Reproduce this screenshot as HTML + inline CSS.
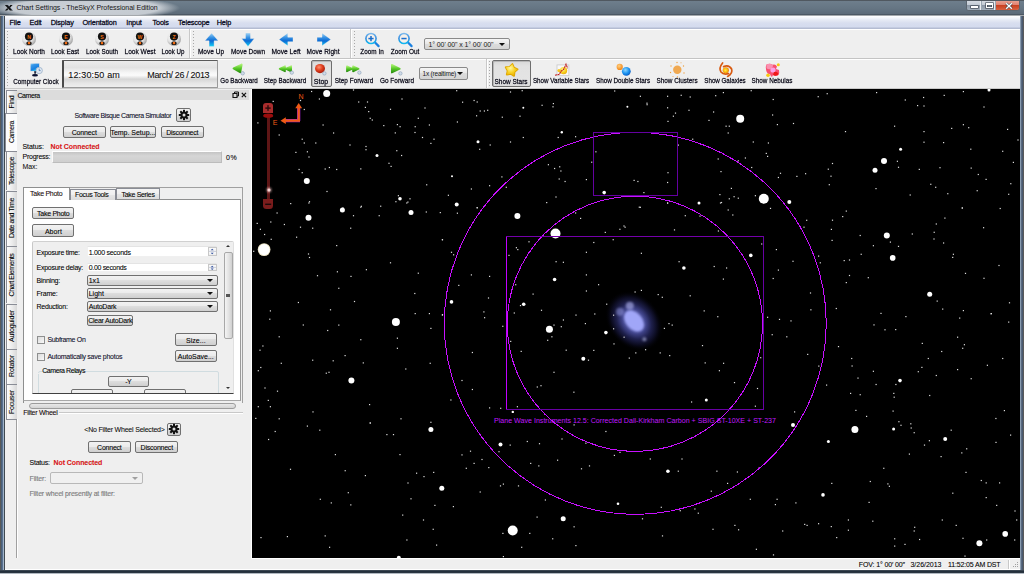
<!DOCTYPE html>
<html><head><meta charset="utf-8">
<style>
*{margin:0;padding:0;box-sizing:border-box}
html,body{width:1024px;height:574px;overflow:hidden}
body{position:relative;background:#5f6f7d;font-family:"Liberation Sans",sans-serif;color:#000}
.a{position:absolute}
.t{position:absolute;font-size:7px;letter-spacing:-0.3px;white-space:nowrap;line-height:8px;color:#000;-webkit-text-stroke:0.3px rgba(0,0,30,.75)}
#title{left:0;top:0;width:1024px;height:16px;background:linear-gradient(180deg,#505860 0,#505860 1px,#6e7e8c 1px,#667684 8px,#5c6a78 14px,#4c5864 14px,#4c5864 15px,#a4a8ac 15px)}
#title:after{content:"";position:absolute;left:0;top:1px;width:230px;height:14px;background:radial-gradient(ellipse 95px 12px at 85px 7px,rgba(205,210,216,.97) 0,rgba(205,210,216,.92) 78%,rgba(205,210,216,0) 100%)}
#frameL{left:0;top:16px;width:5px;height:554px;background:linear-gradient(90deg,#5a5a5a 0,#5a5a5a 1px,#4a6078 1px,#4a6078 2px,#5a7090 2px,#5a7090 3px,#a0b4c8 3px,#a0b4c8 4px,#404850 4px)}
#frameR{left:1020px;top:16px;width:4px;height:554px;background:linear-gradient(90deg,#8a9cb0 0,#8a9cb0 1px,#5a6a80 1px,#5a6a80 2px,#4a5a70 2px,#4a5a70 3px,#5a5a5a 3px)}
#frameB{left:0;top:570px;width:1024px;height:4px;background:linear-gradient(180deg,#3a4550 0,#3a4550 1px,#23303c 1px,#23303c 2px,#2a3540 2px,#2a3540 3px,#b0b8c0 3px)}
#menu{left:5px;top:16px;width:1015px;height:13px;background:linear-gradient(180deg,#ffffff 0,#f4f6fb 2px,#e6eaf4 4px,#d8deef 7px,#d4dbee 11px,#b4bcd2 12px,#b4bcd2 13px)}
#menu span{position:absolute;top:3px;font-size:7.5px;letter-spacing:-0.2px;color:#10104a}
#tb1{left:5px;top:29px;width:1015px;height:30px;background:#efefef;border-top:1px solid #fff;border-bottom:1px solid #c4c4c4}
#tb2{left:5px;top:59px;width:1015px;height:30px;background:#efefef;border-top:1px solid #fff;border-bottom:1px solid #c9c9c9}
#dock{left:5px;top:89px;width:247px;height:481px;background:#efefef;border-bottom:1px solid #fff}
#sky{left:252px;top:89px;width:768px;height:469px;background:#000}
#status{left:252px;top:558px;width:768px;height:12px;background:#efefef;border-top:1px solid #fff;border-bottom:1px solid #fff}
.m{font-size:7.3px;letter-spacing:-0.15px;color:#000}
.grip{position:absolute;width:1px;background:repeating-linear-gradient(180deg,#a8a8a8 0,#a8a8a8 1px,transparent 1px,transparent 3px)}
.combo{position:absolute;border:1px solid #8a8a8a;border-radius:2px;background:linear-gradient(180deg,#f6f6f6 0,#e8e8e8 45%,#dcdcdc 50%,#d4d4d4 100%)}
.combo span{position:absolute;top:2px;font-size:6.5px;letter-spacing:-0.2px;line-height:7px;white-space:nowrap;color:#202020}
.combo i{position:absolute;right:4px;top:4px;width:0;height:0;border-left:3px solid transparent;border-right:3px solid transparent;border-top:3px solid #111}
.press{position:absolute;border:1px solid #6e6e6e;border-radius:2px;background:linear-gradient(180deg,#d8d8d8 0,#e2e2e2 20%,#e4e4e4 80%,#dadada 100%);box-shadow:inset 1px 1px 0 #b8b8b8}
#timebox{border:1px solid #9a9a9a;border-left:2px solid #4a4a4a;border-top:1px solid #5a5a5a;border-radius:1px;background:linear-gradient(180deg,#ececec 0,#e2e2e2 25%,#f6f6f6 45%,#fbfbfb 55%,#d6d6d6 70%,#e6e6e6 85%,#eeeeee 100%)}
.d{position:absolute;white-space:nowrap;line-height:8px;font-size:7px;color:#000;-webkit-text-stroke:0.15px rgba(0,0,0,.5)}
.btn{position:absolute;border:1px solid #707070;border-radius:2px;background:linear-gradient(180deg,#f2f2f2 0,#ebebeb 45%,#dddddd 50%,#cfcfcf 100%)}
.cmb{position:absolute;border:1px solid #707070;border-radius:2px;background:linear-gradient(180deg,#f2f2f2 0,#ebebeb 45%,#dddddd 50%,#cfcfcf 100%)}
.cmb i{position:absolute;right:4px;top:3.3px;width:0;height:0;border-left:3px solid transparent;border-right:3px solid transparent;border-top:3px solid #111}
.cmb.dis{border-color:#b8b8b8;background:#f0f0f0}
.cmb.dis i{border-top-color:#a0a0a0}
.fld{position:absolute;background:#fff;border:1px solid #f0f0f0;border-top-color:#e4e4e4}
.spin{position:absolute;border:1px solid #c8c8c8;background:linear-gradient(180deg,#fafafa,#eeeeee 48%,#d0d4e0 50%,#fafafa 52%,#eeeeee)}
.chk{position:absolute;border:1px solid #8e8f8f;background:linear-gradient(135deg,#dcdcdc,#f8f8f8)}
.vtab{position:absolute;border:1px solid #898c95;border-right:none;border-bottom:none;background:linear-gradient(90deg,#fbfbfb 0,#ececec 50%,#d8d8d8 100%)}
.vtab.sel{background:#fcfcfc}
.htab{position:absolute;border:1px solid #898c95;border-bottom:none;background:linear-gradient(180deg,#f4f4f4 0,#efefef 45%,#e4e4e4 55%,#dcdcdc 100%)}
</style></head><body>
<div id="title" class="a"></div>
<svg class="a" style="left:4.2px;top:3.6px" width="9.5" height="7.5" viewBox="0 0 11 10" preserveAspectRatio="none"><path d="M1 1.2 L4.2 1.2 L10 8.8 L6.8 8.8 Z" fill="#111"/><path d="M10 1.2 L7.4 1.2 L5.2 4.2 L6.4 5.8 Z M1 8.8 L3.6 8.8 L5 6.9 L3.8 5.3 Z" fill="#111"/><path d="M4.2 1.2 L10 8.8" stroke="#3a4a70" stroke-width=".5"/></svg>
<div class="a" style="left:16.4px;top:4px;font-size:7px;letter-spacing:-0.03px;line-height:8px;white-space:nowrap;color:#151515">Chart Settings - TheSkyX Professional Edition</div>
<div class="a" style="left:966px;top:1px;width:54px;height:10px;border:1px solid #5c6670;border-top:none;border-radius:0 0 3px 3px;overflow:hidden;background:#9aa6b2">
 <div class="a" style="left:0;top:0;width:14px;height:9px;background:linear-gradient(180deg,#d4dae2 0,#c2cad4 45%,#8c98a6 50%,#a4b0bc 100%);border-right:1px solid #e8ecf0"></div>
 <div class="a" style="left:15px;top:0;width:13px;height:9px;background:linear-gradient(180deg,#d4dae2 0,#c2cad4 45%,#8c98a6 50%,#a4b0bc 100%);border-right:1px solid #e8ecf0"></div>
 <div class="a" style="left:29px;top:0;width:24px;height:9px;background:linear-gradient(180deg,#e8a090 0,#e08070 45%,#c84020 50%,#d86040 100%)"></div>
 <div class="a" style="left:4px;top:5px;width:6.5px;height:2px;background:#fff;box-shadow:0 0 0 .6px #39424c"></div>
 <div class="a" style="left:18.5px;top:1.6px;width:7px;height:5.8px;border:1.3px solid #fff;border-top-width:2px;box-shadow:0 0 0 .6px #39424c, inset 0 0 0 .6px #39424c"></div>
 <svg class="a" style="left:36.5px;top:1.2px" width="10" height="8" viewBox="0 0 10 8"><path d="M2.2 1.3 L7.8 6.7 M7.8 1.3 L2.2 6.7" stroke="#39424c" stroke-width="2.5"/><path d="M2.2 1.3 L7.8 6.7 M7.8 1.3 L2.2 6.7" stroke="#fff" stroke-width="1.4"/></svg>
</div>
<div id="frameL" class="a"></div>
<div id="frameR" class="a"></div>
<div id="menu" class="a"></div>
<div id="tb1" class="a"></div>
<div id="tb2" class="a"></div>
<svg width="0" height="0" style="position:absolute"><defs>
<radialGradient id="sph" cx=".4" cy=".35" r=".7"><stop offset="0" stop-color="#ffffff"/><stop offset=".55" stop-color="#e4e4e4"/><stop offset="1" stop-color="#9a9a9a"/></radialGradient>
<linearGradient id="blu" gradientUnits="userSpaceOnUse" x1="0" y1="32.5" x2="0" y2="46.5"><stop offset="0" stop-color="#b0dcf8"/><stop offset=".35" stop-color="#3a94e4"/><stop offset=".6" stop-color="#0c6ad4"/><stop offset="1" stop-color="#10d0f8"/></linearGradient>
<linearGradient id="grn" x1="0" y1="0" x2="0" y2="1"><stop offset="0" stop-color="#a8f070"/><stop offset=".5" stop-color="#58c828"/><stop offset="1" stop-color="#2a9010"/></linearGradient>
<radialGradient id="red" cx=".4" cy=".35" r=".7"><stop offset="0" stop-color="#ff9070"/><stop offset=".5" stop-color="#e04020"/><stop offset="1" stop-color="#a01808"/></radialGradient>
<radialGradient id="yel" cx=".4" cy=".35" r=".8"><stop offset="0" stop-color="#fff8a0"/><stop offset=".5" stop-color="#f8d020"/><stop offset="1" stop-color="#e0a000"/></radialGradient>
<radialGradient id="org" cx=".4" cy=".35" r=".7"><stop offset="0" stop-color="#ffd080"/><stop offset="1" stop-color="#f08010"/></radialGradient>
<radialGradient id="bluc" cx=".4" cy=".35" r=".7"><stop offset="0" stop-color="#90d8ff"/><stop offset=".6" stop-color="#1890f0"/><stop offset="1" stop-color="#0858c0"/></radialGradient>
<radialGradient id="org2" cx=".45" cy=".5" r=".6"><stop offset="0" stop-color="#fff040"/><stop offset=".6" stop-color="#f8b010"/><stop offset="1" stop-color="#e06a10"/></radialGradient>
<linearGradient id="lens" x1="0" y1="0" x2="0" y2="1"><stop offset="0" stop-color="#7ab8ec"/><stop offset=".5" stop-color="#2a88e0"/><stop offset="1" stop-color="#10b8f0"/></linearGradient>
<linearGradient id="mon" x1="0" y1="0" x2=".6" y2="1"><stop offset="0" stop-color="#a0d8fa"/><stop offset=".3" stop-color="#3898e8"/><stop offset=".7" stop-color="#1a80e0"/><stop offset="1" stop-color="#20d0f8"/></linearGradient>
</defs></svg>
<div class="t m" style="left:9.5px;top:18.6px">File</div>
<div class="t m" style="left:29.5px;top:18.6px">Edit</div>
<div class="t m" style="left:50.75px;top:18.6px">Display</div>
<div class="t m" style="left:82.5px;top:18.6px">Orientation</div>
<div class="t m" style="left:126.25px;top:18.6px">Input</div>
<div class="t m" style="left:152.5px;top:18.6px">Tools</div>
<div class="t m" style="left:178px;top:18.6px">Telescope</div>
<div class="t m" style="left:216.75px;top:18.6px">Help</div>
<div class="grip" style="left:7px;top:31px;height:25px"></div>
<div class="a" style="left:189px;top:29px;width:1px;height:29px;background:#c8c8c8;box-shadow:1px 0 0 #fff"></div>
<div class="grip" style="left:193px;top:31px;height:25px"></div>
<div class="a" style="left:350px;top:29px;width:1px;height:29px;background:#c8c8c8;box-shadow:1px 0 0 #fff"></div>
<div class="grip" style="left:354px;top:31px;height:25px"></div>
<div class="grip" style="left:7px;top:61px;height:26px"></div>
<div class="a" style="left:485.5px;top:59px;width:1px;height:29px;background:#c8c8c8;box-shadow:1px 0 0 #fff"></div>
<div class="grip" style="left:488.5px;top:61px;height:26px"></div>
<svg class="a" style="left:21.2px;top:31.3px" width="16" height="16" viewBox="-8 -8 16 16">
<circle r="7" fill="url(#sph)"/>
<circle cy="-2.4" r="4.1" fill="#111"/>
<text y="-0.3" text-anchor="middle" font-family="Liberation Sans" font-weight="bold" font-size="5.2" fill="#f07010">N</text>
<rect x="-2.6" y="2.4" width="5.2" height="3.6" rx="1.6" fill="#151515"/>
<circle cy="4.1" r="1.3" fill="#f06a10"/>
</svg>
<div class="t" style="left:-21.00px;top:47.64px;width:100px;text-align:center;font-size:8.0px;letter-spacing:0;transform:scaleX(0.815);">Look North</div>
<svg class="a" style="left:57.6px;top:31.3px" width="16" height="16" viewBox="-8 -8 16 16">
<circle r="7" fill="url(#sph)"/>
<circle cy="-2.4" r="4.1" fill="#111"/>
<text y="-0.3" text-anchor="middle" font-family="Liberation Sans" font-weight="bold" font-size="5.2" fill="#f07010">E</text>
<rect x="-2.6" y="2.4" width="5.2" height="3.6" rx="1.6" fill="#151515"/>
<circle cy="4.1" r="1.3" fill="#f06a10"/>
</svg>
<div class="t" style="left:15.20px;top:47.64px;width:100px;text-align:center;font-size:8.0px;letter-spacing:0;transform:scaleX(0.793);">Look East</div>
<svg class="a" style="left:94.0px;top:31.3px" width="16" height="16" viewBox="-8 -8 16 16">
<circle r="7" fill="url(#sph)"/>
<circle cy="-2.4" r="4.1" fill="#111"/>
<text y="-0.3" text-anchor="middle" font-family="Liberation Sans" font-weight="bold" font-size="5.2" fill="#f07010">S</text>
<rect x="-2.6" y="2.4" width="5.2" height="3.6" rx="1.6" fill="#151515"/>
<circle cy="4.1" r="1.3" fill="#f06a10"/>
</svg>
<div class="t" style="left:51.50px;top:47.64px;width:100px;text-align:center;font-size:8.0px;letter-spacing:0;transform:scaleX(0.790);">Look South</div>
<svg class="a" style="left:132.0px;top:31.3px" width="16" height="16" viewBox="-8 -8 16 16">
<circle r="7" fill="url(#sph)"/>
<circle cy="-2.4" r="4.1" fill="#111"/>
<text y="-0.3" text-anchor="middle" font-family="Liberation Sans" font-weight="bold" font-size="5.2" fill="#f07010">W</text>
<rect x="-2.6" y="2.4" width="5.2" height="3.6" rx="1.6" fill="#151515"/>
<circle cy="4.1" r="1.3" fill="#f06a10"/>
</svg>
<div class="t" style="left:90.00px;top:47.64px;width:100px;text-align:center;font-size:8.0px;letter-spacing:0;transform:scaleX(0.823);">Look West</div>
<svg class="a" style="left:165.5px;top:31.3px" width="16" height="16" viewBox="-8 -8 16 16">
<circle r="7" fill="url(#sph)"/>
<circle cy="-2.4" r="4.1" fill="#111"/>
<text y="-0.3" text-anchor="middle" font-family="Liberation Sans" font-weight="bold" font-size="5.2" fill="#f07010">Z</text>
<rect x="-2.6" y="2.4" width="5.2" height="3.6" rx="1.6" fill="#151515"/>
<circle cy="4.1" r="1.3" fill="#f06a10"/>
</svg>
<div class="t" style="left:123.00px;top:47.64px;width:100px;text-align:center;font-size:8.0px;letter-spacing:0;transform:scaleX(0.772);">Look Up</div>
<svg class="a" style="left:195px;top:30px" width="145" height="18" viewBox="195 30 145 18"><path d="M211.6 32.9 L218.2 40.8 L214.1 40.8 L214.1 46.4 L209.1 46.4 L209.1 40.8 L205 40.8 Z M248 46.4 L254.4 38.5 L250.5 38.5 L250.5 32.9 L245.5 32.9 L245.5 38.5 L241.6 38.5 Z M279 39.4 L287.8 32.9 L287.8 37.2 L293 37.2 L293 41.7 L287.8 41.7 L287.8 45.8 Z M330.8 39.4 L322 32.9 L322 37.2 L317 37.2 L317 41.7 L322 41.7 L322 45.8 Z" fill="url(#blu)" stroke="#fff4e8" stroke-width=".5" stroke-opacity=".7"/></svg>
<div class="t" style="left:161.20px;top:47.54px;width:100px;text-align:center;font-size:8.0px;letter-spacing:0;transform:scaleX(0.818);">Move Up</div>
<div class="t" style="left:197.50px;top:47.54px;width:100px;text-align:center;font-size:8.0px;letter-spacing:0;transform:scaleX(0.807);">Move Down</div>
<div class="t" style="left:236.00px;top:47.54px;width:100px;text-align:center;font-size:8.0px;letter-spacing:0;transform:scaleX(0.831);">Move Left</div>
<div class="t" style="left:273.40px;top:47.54px;width:100px;text-align:center;font-size:8.0px;letter-spacing:0;transform:scaleX(0.813);">Move Right</div>
<svg class="a" style="left:363.5px;top:30.5px" width="18" height="18" viewBox="-7 -7.5 18 18">
<path d="M3.8 3.8 L7.6 7.6" stroke="#1a80e0" stroke-width="2.2" stroke-linecap="round"/>
<circle r="5.1" fill="#f6f0ea" stroke="url(#lens)" stroke-width="1.5"/><rect x="-2.6" y="-0.7" width="5.2" height="1.5" fill="#1a70d0"/><rect x="-0.75" y="-2.5" width="1.5" height="5.2" fill="#1a6cc8"/>
</svg>
<div class="t" style="left:322.20px;top:47.54px;width:100px;text-align:center;font-size:8.0px;letter-spacing:0;transform:scaleX(0.797);">Zoom In</div>
<svg class="a" style="left:397.0px;top:30.5px" width="18" height="18" viewBox="-7 -7.5 18 18">
<path d="M3.8 3.8 L7.6 7.6" stroke="#1a80e0" stroke-width="2.2" stroke-linecap="round"/>
<circle r="5.1" fill="#f6f0ea" stroke="url(#lens)" stroke-width="1.5"/><rect x="-2.6" y="-0.7" width="5.2" height="1.5" fill="#1a70d0"/>
</svg>
<div class="t" style="left:354.80px;top:47.54px;width:100px;text-align:center;font-size:8.0px;letter-spacing:0;transform:scaleX(0.801);">Zoom Out</div>
<div class="combo" style="left:424px;top:37.5px;width:86px;height:12px"><span style="left:0;width:72px;text-align:center;font-size:7px;letter-spacing:-0.1px">1° 00' 00" x 1° 00' 00"</span><i></i></div>
<svg class="a" style="left:28px;top:62px" width="18" height="16" viewBox="0 0 18 16">
<rect x="2.3" y="1.3" width="9" height="7.8" fill="url(#mon)" stroke="#f4e8e0" stroke-width=".4"/><rect x="6.3" y="9.1" width="1.6" height="2.6" fill="#101830"/><ellipse cx="7" cy="13.3" rx="3" ry="1.3" fill="#0a1030"/>
<circle cx="11.2" cy="8.5" r="3.2" fill="#dfe8f2" stroke="#9ab0c8" stroke-width=".8"/><path d="M11.2 6.6 v2 h1.4" stroke="#3a6aa0" stroke-width=".7" fill="none"/>
</svg>
<div class="t" style="left:-14.20px;top:77.84px;width:100px;text-align:center;font-size:8.0px;letter-spacing:0;transform:scaleX(0.793);">Computer Clock</div>
<div class="a" id="timebox" style="left:62px;top:60px;width:156px;height:28px"></div>
<div class="a" style="left:68.3px;top:69.5px;font-size:9px;letter-spacing:0.15px;line-height:10px;color:#111;-webkit-text-stroke:.1px #111;white-space:nowrap">12:30:50 am</div>
<div class="a" style="left:147.3px;top:69.5px;font-size:9px;letter-spacing:-0.35px;line-height:10px;color:#111;-webkit-text-stroke:.1px #111;white-space:nowrap">March/ 26 / 2013</div>
<div class="press" style="left:311px;top:60px;width:21px;height:27px"></div>
<div class="press" style="left:491.5px;top:60.3px;width:39.5px;height:26.6px"></div>
<svg class="a" style="left:220px;top:58px" width="200" height="20" viewBox="220 58 200 20"><path d="M233.6 68.4 L241.6 64.6 L240.2 72.2 Z" fill="url(#grn)" stroke="url(#grn)" stroke-width="2" stroke-linejoin="round"/><circle cx="242.7" cy="73.3" r="1.7" fill="#d0dce8" stroke="#8aa0b8" stroke-width=".6"/><path d="M279.6 68.8 L285 66.2 L285 71.4 Z M285.6 68.8 L291.2 66.2 L291.2 71.4 Z" fill="url(#grn)" stroke="url(#grn)" stroke-width="1.6" stroke-linejoin="round"/><circle cx="291.8" cy="72.6" r="1.7" fill="#d0dce8" stroke="#8aa0b8" stroke-width=".6"/><ellipse cx="320" cy="68.6" rx="5" ry="4.6" fill="url(#red)"/><circle cx="324.4" cy="73.4" r="1.7" fill="#d0dce8" stroke="#8aa0b8" stroke-width=".6"/><path d="M346.9 66.2 L352.3 68.8 L346.9 71.4 Z M353 66.2 L358.6 68.8 L353 71.4 Z" fill="url(#grn)" stroke="url(#grn)" stroke-width="1.6" stroke-linejoin="round"/><circle cx="359.4" cy="72.6" r="1.7" fill="#d0dce8" stroke="#8aa0b8" stroke-width=".6"/><path d="M391.8 64.8 L399.8 68.8 L391.8 72.6 Z" fill="url(#grn)" stroke="url(#grn)" stroke-width="1.6" stroke-linejoin="round"/><circle cx="400.4" cy="73.4" r="1.7" fill="#d0dce8" stroke="#8aa0b8" stroke-width=".6"/></svg>
<div class="t" style="left:188.80px;top:77.24px;width:100px;text-align:center;font-size:8.0px;letter-spacing:0;transform:scaleX(0.779);">Go Backward</div>
<div class="t" style="left:235.30px;top:77.24px;width:100px;text-align:center;font-size:8.0px;letter-spacing:0;transform:scaleX(0.788);">Step Backward</div>
<div class="t" style="left:270.80px;top:78.04px;width:100px;text-align:center;font-size:8.0px;letter-spacing:0;transform:scaleX(0.880);">Stop</div>
<div class="t" style="left:303.70px;top:77.24px;width:100px;text-align:center;font-size:8.0px;letter-spacing:0;transform:scaleX(0.802);">Step Forward</div>
<div class="t" style="left:346.50px;top:77.24px;width:100px;text-align:center;font-size:8.0px;letter-spacing:0;transform:scaleX(0.805);">Go Forward</div>
<div class="combo" style="left:418.5px;top:67.4px;width:49.5px;height:12.2px"><span style="left:3px;width:36px">1x (realtime)</span><i></i></div>
<svg class="a" style="left:500px;top:60px" width="300" height="20" viewBox="500 60 300 20">
<polygon points="512.39,64.00 513.96,67.63 517.54,69.32 514.57,71.94 514.06,75.86 510.66,73.84 506.77,74.58 507.64,70.71 505.74,67.24 509.68,66.87" fill="url(#yel)" stroke="#e0a800" stroke-width="1.8" stroke-linejoin="round"/><polygon points="512.39,64.00 513.96,67.63 517.54,69.32 514.57,71.94 514.06,75.86 510.66,73.84 506.77,74.58 507.64,70.71 505.74,67.24 509.68,66.87" fill="url(#yel)"/>
<rect x="557" y="64.9" width="11.9" height="10.8" fill="#f8f8f8" stroke="#c8c8c8" stroke-width=".8"/>
<circle cx="563.6" cy="70.6" r="3.6" fill="url(#yel)"/><circle cx="559" cy="70.6" r="1.6" fill="#f8c820"/>
<path d="M555 75.3 L559.5 74.2 L560.6 71.6 L563.8 69.2 L564.6 67.4 L566 64.2 L567.6 68.3" stroke="#c01818" stroke-width="1.1" fill="none" stroke-dasharray="2 .6"/>
<circle cx="619.7" cy="66.9" r="3.1" fill="url(#org)"/>
<circle cx="626.3" cy="71.3" r="4.4" fill="url(#bluc)"/>
<g fill="#f0a040"><circle cx="677.3" cy="69.7" r="4.2" fill="#f0a850"/>
<circle cx="671" cy="66" r=".7"/><circle cx="683.5" cy="66" r=".7"/><circle cx="670.5" cy="72.5" r=".7"/><circle cx="684" cy="73" r=".7"/><circle cx="677" cy="62.5" r=".7"/><circle cx="677.5" cy="77" r=".7"/><circle cx="681" cy="62.8" r=".5"/><circle cx="673" cy="76.5" r=".5"/></g>
<path d="M722.6 63 Q718.5 68 721 72 Q723.5 75 728.5 73.6" stroke="#d85a10" stroke-width="1.7" fill="none" stroke-linecap="round"/>
<path d="M723.6 66.6 Q729 64.5 731.6 69 Q733 73.5 727.6 76.4" stroke="#d85a10" stroke-width="1.7" fill="none" stroke-linecap="round"/>
<circle cx="725.8" cy="70.3" r="3.1" fill="url(#org2)"/>
<path d="M766.5 64.5 Q770 62.8 772.5 64.8 Q775.5 63.5 777 66.5 L776 69 L779 70 Q780 73 778 75.5 Q775 76.5 773 75 L772 77 Q770.5 76.2 770 74.2 Q767 74 766.2 70.5 Q765 67 766.5 64.5Z" fill="#f85070"/>
<path d="M766.5 64.5 Q770 62.8 772.5 64.8 Q774 66 771 69 Q768 70 766.5 68Z" fill="#fa90b0"/>
<circle cx="773" cy="70" r="2.6" fill="#f8a0e8"/>
<path d="M774 72 Q778 71 778.5 74.5 Q776 76.5 773 75Z" fill="#f01818"/>
<circle cx="778.3" cy="64.8" r="1.5" fill="#f8c810"/><circle cx="768" cy="75.3" r="1.8" fill="#f8c810"/>
</svg>
<div class="t" style="left:461.00px;top:77.74px;width:100px;text-align:center;font-size:8.0px;letter-spacing:0;transform:scaleX(0.807);">Show Stars</div>
<div class="t" style="left:511.40px;top:77.24px;width:100px;text-align:center;font-size:8.0px;letter-spacing:0;transform:scaleX(0.782);">Show Variable Stars</div>
<div class="t" style="left:573.00px;top:77.24px;width:100px;text-align:center;font-size:8.0px;letter-spacing:0;transform:scaleX(0.790);">Show Double Stars</div>
<div class="t" style="left:626.90px;top:77.24px;width:100px;text-align:center;font-size:8.0px;letter-spacing:0;transform:scaleX(0.799);">Show Clusters</div>
<div class="t" style="left:674.80px;top:77.24px;width:100px;text-align:center;font-size:8.0px;letter-spacing:0;transform:scaleX(0.776);">Show Galaxies</div>
<div class="t" style="left:722.30px;top:77.24px;width:100px;text-align:center;font-size:8.0px;letter-spacing:0;transform:scaleX(0.793);">Show Nebulas</div>
<div id="dock" class="a"></div>
<div class="a" style="left:251px;top:89px;width:1px;height:470px;background:#fff"></div>
<div class="a" style="left:16px;top:419px;width:1px;height:139px;background:#a0a0a0;box-shadow:1px 0 0 #fff"></div>
<div class="a" style="left:6px;top:419.3px;width:11px;height:1px;background:#898c95"></div>
<div class="vtab" style="left:6px;top:90.0px;width:11px;height:23.0px"></div>
<div class="d" style="left:-38.5px;top:97.5px;width:100px;height:8px;text-align:center;font-size:7px;line-height:8px;letter-spacing:-0.156px;transform:rotate(-90deg)">Find</div>
<div class="vtab sel" style="left:5px;top:113.0px;width:12px;height:39.2px;border-bottom:1px solid #898c95"></div>
<div class="d" style="left:-38.5px;top:128.1px;width:100px;height:8px;text-align:center;font-size:7px;line-height:8px;letter-spacing:-0.518px;transform:rotate(-90deg)">Camera</div>
<div class="vtab" style="left:6px;top:151.2px;width:11px;height:39.3px"></div>
<div class="d" style="left:-38.5px;top:166.8px;width:100px;height:8px;text-align:center;font-size:7px;line-height:8px;letter-spacing:-0.392px;transform:rotate(-90deg)">Telescope</div>
<div class="vtab" style="left:6px;top:190.5px;width:11px;height:55.8px"></div>
<div class="d" style="left:-38.5px;top:214.4px;width:100px;height:8px;text-align:center;font-size:7px;line-height:8px;letter-spacing:-0.425px;transform:rotate(-90deg)">Date and Time</div>
<div class="vtab" style="left:6px;top:246.3px;width:11px;height:57.2px"></div>
<div class="d" style="left:-38.5px;top:270.9px;width:100px;height:8px;text-align:center;font-size:7px;line-height:8px;letter-spacing:-0.375px;transform:rotate(-90deg)">Chart Elements</div>
<div class="vtab" style="left:6px;top:303.5px;width:11px;height:45.3px"></div>
<div class="d" style="left:-38.5px;top:322.1px;width:100px;height:8px;text-align:center;font-size:7px;line-height:8px;letter-spacing:-0.186px;transform:rotate(-90deg)">Autoguider</div>
<div class="vtab" style="left:6px;top:348.8px;width:11px;height:35.2px"></div>
<div class="d" style="left:-38.5px;top:362.4px;width:100px;height:8px;text-align:center;font-size:7px;line-height:8px;letter-spacing:-0.138px;transform:rotate(-90deg)">Rotator</div>
<div class="vtab" style="left:6px;top:384.0px;width:11px;height:35.3px"></div>
<div class="d" style="left:-38.5px;top:397.6px;width:100px;height:8px;text-align:center;font-size:7px;line-height:8px;letter-spacing:-0.185px;transform:rotate(-90deg)">Focuser</div>
<div class="a" style="left:17px;top:90px;width:232px;height:10px;background:#dcdcdc"></div>
<div class="d" style="left:17.50px;top:91.66px;font-size:7px;letter-spacing:-0.443px;color:#000;">Camera</div>
<svg class="a" style="left:230px;top:91px" width="18" height="8" viewBox="0 0 18 8"><path d="M3 2.5 h4 v4 h-4z" fill="none" stroke="#111" stroke-width="1.1"/><path d="M4.5 2.5 v-1.5 h4 v4 h-1.5" fill="none" stroke="#111" stroke-width="1"/><path d="M11.8 1.8 L16 6.2 M16 1.8 L11.8 6.2" stroke="#111" stroke-width="1.2"/></svg>
<div class="d" style="left:74.50px;top:111.66px;font-size:7px;letter-spacing:-0.395px;color:#101030;">Software Bisque Camera Simulator</div>
<div class="btn" style="left:176.0px;top:108.0px;width:15.0px;height:13.6px"></div>
<svg class="a" style="left:177.5px;top:108.8px" width="12" height="12" viewBox="-6 -6 12 12"><g fill="#111"><rect x="-1" y="-5.2" width="2" height="10.4" transform="rotate(0)"/><rect x="-1" y="-5.2" width="2" height="10.4" transform="rotate(45)"/><rect x="-1" y="-5.2" width="2" height="10.4" transform="rotate(90)"/><rect x="-1" y="-5.2" width="2" height="10.4" transform="rotate(135)"/><circle r="3.6"/></g><circle r="1.5" fill="#ddd"/></svg>
<div class="btn" style="left:63.0px;top:126.3px;width:42.6px;height:12.2px"></div>
<div class="d" style="left:24.22px;top:129.46px;width:120px;text-align:center;font-size:7px;letter-spacing:-0.154px;color:#000;">Connect</div>
<div class="btn" style="left:110.0px;top:126.3px;width:45.8px;height:12.2px"></div>
<div class="d" style="left:72.89px;top:129.46px;width:120px;text-align:center;font-size:7px;letter-spacing:-0.024px;color:#000;">Temp. Setup...</div>
<div class="btn" style="left:160.8px;top:126.3px;width:43.0px;height:12.2px"></div>
<div class="d" style="left:122.16px;top:129.46px;width:120px;text-align:center;font-size:7px;letter-spacing:-0.284px;color:#000;">Disconnect</div>
<div class="d" style="left:22.50px;top:142.66px;font-size:7px;letter-spacing:-0.057px;color:#000;">Status:</div>
<div class="d" style="left:50.50px;top:142.66px;font-size:7px;letter-spacing:-0.060px;color:#f01818;font-weight:bold;">Not Connected</div>
<div class="d" style="left:22.50px;top:153.36px;font-size:7px;letter-spacing:-0.241px;color:#000;">Progress:</div>
<div class="a" style="left:52px;top:151.3px;width:170px;height:11.3px;background:linear-gradient(180deg,#c4c4c4,#d6d6d6 40%,#cfcfcf);border:1px solid #bcbcbc;border-top-color:#fff;border-left-color:#fafafa"></div>
<div class="d" style="left:226.00px;top:154.36px;font-size:7px;letter-spacing:0.688px;color:#000;">0%</div>
<div class="d" style="left:22.50px;top:163.36px;font-size:7px;letter-spacing:-0.068px;color:#202020;">Max:</div>
<div class="a" style="left:23px;top:186.5px;width:220px;height:216px;border:1px solid #a0a0a0;border-left-color:#8e8f8f;border-bottom:none"></div>
<div class="a" style="left:23.4px;top:199.3px;width:217.6px;height:201.8px;background:#fff;border:1px solid #8e8f8f;border-right-color:#9a9a9a;border-bottom-color:#a8a8a8"></div>
<div class="htab" style="left:70px;top:188.8px;width:45.8px;height:11px"></div>
<div class="htab" style="left:116px;top:188.4px;width:43.5px;height:11px"></div>
<div class="a" style="left:23.4px;top:187px;width:47px;height:13.3px;background:#fff;border:1px solid #8e8f8f;border-bottom:none"></div>
<div class="d" style="left:30.10px;top:190.16px;font-size:7px;letter-spacing:-0.273px;color:#1a0a0a;">Take Photo</div>
<div class="d" style="left:75.10px;top:190.96px;font-size:7px;letter-spacing:-0.358px;color:#000;">Focus Tools</div>
<div class="d" style="left:121.60px;top:190.66px;font-size:7px;letter-spacing:-0.325px;color:#000;">Take Series</div>
<div class="btn" style="left:32.3px;top:207.4px;width:42.1px;height:12.0px"></div>
<div class="d" style="left:-6.79px;top:210.36px;width:120px;text-align:center;font-size:7px;letter-spacing:-0.273px;color:#000;">Take Photo</div>
<div class="btn" style="left:32.3px;top:224.4px;width:42.1px;height:12.2px"></div>
<div class="d" style="left:-6.62px;top:227.56px;width:120px;text-align:center;font-size:7px;letter-spacing:0.053px;color:#000;">Abort</div>
<div class="a" style="left:31.5px;top:240.7px;width:202px;height:153px;background:#efefef;border:1px solid #d0d0d0;border-left-color:#c8c8c8;border-right-color:#e0e0e0;border-bottom-color:#404040;border-radius:2px 2px 0 0;overflow:hidden">
<div class="a" style="left:5px;top:129px;width:181px;height:40px;border:1px solid #d0dce0;border-radius:2px"></div>
<div class="a" style="left:5px;top:131.5px;width:6px;height:1px;background:#efefef"></div>
</div>
<div class="a" style="left:223px;top:241.5px;width:10px;height:151px;background:#efefef"></div>
<div class="a" style="left:225.5px;top:244.5px;width:0;height:0;border-left:2.5px solid transparent;border-right:2.5px solid transparent;border-bottom:2.5px solid #333"></div>
<div class="a" style="left:225.5px;top:387px;width:0;height:0;border-left:2.5px solid transparent;border-right:2.5px solid transparent;border-top:2.5px solid #333"></div>
<div class="a" style="left:224px;top:252px;width:8.5px;height:87.4px;border:1px solid #a8a8a8;border-radius:2px;background:linear-gradient(90deg,#f4f4f4,#e0e0e0 60%,#d0d0d0)"></div>
<div class="a" style="left:226.3px;top:293.8px;width:4px;height:3px;border-top:1px solid #555;border-bottom:1px solid #555"></div><div class="a" style="left:226.3px;top:295.3px;width:4px;height:1px;background:#555"></div>
<div class="d" style="left:36.50px;top:248.86px;font-size:7px;letter-spacing:-0.249px;color:#000;">Exposure time:</div>
<div class="fld" style="left:87.2px;top:246.4px;width:130.2px;height:11.0px"></div>
<div class="spin" style="left:208.2px;top:247.4px;width:8.4px;height:9.0px"></div>
<svg class="a" style="left:208.2px;top:247.4px" width="8.4" height="9.0" viewBox="0 0 8.4 9.0"><path d="M2.7 3.2 L4.2 1.8 L5.7 3.2Z M2.7 5.8 L4.2 7.2 L5.7 5.8Z" fill="#3050a0"/></svg>
<div class="d" style="left:88.70px;top:248.56px;font-size:7px;letter-spacing:-0.273px;color:#000;">1.000 seconds</div>
<div class="d" style="left:36.50px;top:263.56px;font-size:7px;letter-spacing:-0.247px;color:#000;">Exposure delay:</div>
<div class="fld" style="left:87.2px;top:262.8px;width:130.2px;height:9.7px"></div>
<div class="spin" style="left:208.2px;top:263.8px;width:8.4px;height:7.7px"></div>
<svg class="a" style="left:208.2px;top:263.8px" width="8.4" height="7.7" viewBox="0 0 8.4 7.7"><path d="M2.7 3.2 L4.2 1.8 L5.7 3.2Z M2.7 4.5 L4.2 5.9 L5.7 4.5Z" fill="#3050a0"/></svg>
<div class="d" style="left:88.70px;top:263.66px;font-size:7px;letter-spacing:-0.321px;color:#000;">0.00 seconds</div>
<div class="d" style="left:36.50px;top:276.96px;font-size:7px;letter-spacing:-0.225px;color:#000;">Binning:</div>
<div class="cmb" style="left:87.2px;top:274.8px;width:130.4px;height:11.0px"><i></i></div>
<div class="d" style="left:88.70px;top:276.96px;font-size:7px;letter-spacing:-0.099px;color:#000;">1x1</div>
<div class="d" style="left:36.50px;top:289.86px;font-size:7px;letter-spacing:-0.179px;color:#000;">Frame:</div>
<div class="cmb" style="left:87.2px;top:288.2px;width:130.4px;height:10.5px"><i></i></div>
<div class="d" style="left:88.70px;top:289.86px;font-size:7px;letter-spacing:0.002px;color:#000;">Light</div>
<div class="d" style="left:36.50px;top:302.86px;font-size:7px;letter-spacing:-0.237px;color:#000;">Reduction:</div>
<div class="cmb" style="left:87.2px;top:300.9px;width:130.4px;height:10.7px"><i></i></div>
<div class="d" style="left:88.70px;top:302.76px;font-size:7px;letter-spacing:-0.186px;color:#000;">AutoDark</div>
<div class="btn" style="left:87.2px;top:314.6px;width:46.3px;height:11.7px"></div>
<div class="d" style="left:50.23px;top:317.26px;width:120px;text-align:center;font-size:7px;letter-spacing:-0.248px;color:#000;">Clear AutoDark</div>
<div class="chk" style="left:37.4px;top:336px;width:7.5px;height:7.6px"></div>
<div class="d" style="left:47.40px;top:336.06px;font-size:7px;letter-spacing:-0.322px;color:#101030;">Subframe On</div>
<div class="btn" style="left:174.5px;top:333.0px;width:42.6px;height:12.7px"></div>
<div class="d" style="left:135.82px;top:336.66px;width:120px;text-align:center;font-size:7px;letter-spacing:0.050px;color:#000;">Size...</div>
<div class="chk" style="left:37.4px;top:353.3px;width:7.5px;height:7.5px"></div>
<div class="d" style="left:47.40px;top:353.16px;font-size:7px;letter-spacing:-0.257px;color:#101030;">Automatically save photos</div>
<div class="btn" style="left:174.5px;top:350.2px;width:42.6px;height:12.3px"></div>
<div class="d" style="left:135.78px;top:353.46px;width:120px;text-align:center;font-size:7px;letter-spacing:-0.037px;color:#000;">AutoSave...</div>
<div class="d" style="left:42.20px;top:366.96px;font-size:7px;letter-spacing:-0.419px;color:#000;">Camera Relays</div>
<div class="btn" style="left:107.6px;top:375.8px;width:41.8px;height:11.7px"></div>
<div class="d" style="left:68.25px;top:378.46px;width:120px;text-align:center;font-size:7px;letter-spacing:-0.500px;color:#000;">-Y</div>
<div class="a" style="left:32.5px;top:389px;width:190px;height:3.8px;overflow:hidden">
<div class="btn" style="left:38px;top:0;width:42px;height:10px"></div><div class="btn" style="left:111px;top:0;width:42px;height:10px"></div></div>
<div class="a" style="left:29px;top:403px;width:207.3px;height:5.8px;border:1px solid #9c9c9c;border-radius:3px;background:linear-gradient(180deg,#e8e8e8,#d4d4d4)"></div>
<div class="d" style="left:23.30px;top:408.96px;font-size:7px;letter-spacing:-0.262px;color:#1a0a0a;">Filter Wheel</div>
<div class="a" style="left:58.7px;top:412px;width:184.3px;height:1px;background:#c8c8c8;box-shadow:0 1px 0 #fff"></div>
<div class="d" style="left:84.30px;top:426.36px;font-size:7px;letter-spacing:-0.200px;color:#101010;">&lt;No Filter Wheel Selected&gt;</div>
<div class="btn" style="left:166.7px;top:423.2px;width:14.8px;height:12.5px"></div>
<svg class="a" style="left:168.1px;top:423.4px" width="12" height="12" viewBox="-6 -6 12 12"><g fill="#111"><rect x="-1" y="-5.2" width="2" height="10.4" transform="rotate(0)"/><rect x="-1" y="-5.2" width="2" height="10.4" transform="rotate(45)"/><rect x="-1" y="-5.2" width="2" height="10.4" transform="rotate(90)"/><rect x="-1" y="-5.2" width="2" height="10.4" transform="rotate(135)"/><circle r="3.6"/></g><circle r="1.5" fill="#ddd"/></svg>
<div class="btn" style="left:88.3px;top:441.0px;width:42.3px;height:11.6px"></div>
<div class="d" style="left:49.34px;top:443.56px;width:120px;text-align:center;font-size:7px;letter-spacing:-0.225px;color:#000;">Connect</div>
<div class="btn" style="left:135.3px;top:441.0px;width:43.1px;height:11.6px"></div>
<div class="d" style="left:96.73px;top:443.56px;width:120px;text-align:center;font-size:7px;letter-spacing:-0.234px;color:#000;">Disconnect</div>
<div class="d" style="left:29.50px;top:459.46px;font-size:7px;letter-spacing:-0.242px;color:#000;">Status:</div>
<div class="d" style="left:53.50px;top:459.46px;font-size:7px;letter-spacing:-0.083px;color:#f01818;font-weight:bold;">Not Connected</div>
<div class="d" style="left:29.50px;top:474.66px;font-size:7px;letter-spacing:-0.129px;color:#8a8a8a;">Filter:</div>
<div class="cmb dis" style="left:50.3px;top:472.3px;width:92.4px;height:11.3px"><i></i></div>
<div class="d" style="left:29.50px;top:489.96px;font-size:7px;letter-spacing:-0.171px;color:#8a8a8a;">Filter wheel presently at filter:</div>
<div id="sky" class="a"></div>
<svg class="a" style="left:252px;top:89px" width="768" height="469" viewBox="252 89 768 469">
<defs>
<filter id="bl1" x="-50%" y="-50%" width="200%" height="200%"><feGaussianBlur stdDeviation="1.2"/></filter>
<filter id="bl2" x="-50%" y="-50%" width="200%" height="200%"><feGaussianBlur stdDeviation="5"/></filter>
<radialGradient id="gglow"><stop offset="0" stop-color="#9096ec"/><stop offset=".25" stop-color="#7076d0"/><stop offset=".42" stop-color="#4a4ea0"/><stop offset=".6" stop-color="#24265a"/><stop offset=".8" stop-color="#0c0c22"/><stop offset="1" stop-color="#000" stop-opacity="0"/></radialGradient>
</defs>
<g transform="translate(634 321) rotate(50)">
<ellipse rx="33" ry="26" fill="url(#gglow)" opacity=".85"/>
<ellipse rx="12" ry="8" fill="#a0a6f8" filter="url(#bl1)"/>
</g>
<circle cx="629.8" cy="305.7" r="4" fill="#b0b4f0" opacity=".6" filter="url(#bl1)"/>
<circle cx="620" cy="311.8" r="4" fill="#9a9ee8" opacity=".5" filter="url(#bl1)"/>
<circle cx="644.4" cy="339.3" r="2" fill="#c0c4f0" opacity=".6" filter="url(#bl1)"/>
<rect x="318.8" y="98.4" width="1.2" height="1.2" fill="#ddd"/>
<rect x="366.9" y="101.4" width="1.2" height="1.2" fill="#ddd"/>
<rect x="401.4" y="98.4" width="1.2" height="1.2" fill="#ddd"/>
<rect x="424.4" y="107.4" width="1.2" height="1.2" fill="#ddd"/>
<rect x="389.9" y="108.7" width="1.2" height="1.2" fill="#ddd"/>
<rect x="257.3" y="122.3" width="1.2" height="1.2" fill="#ddd"/>
<rect x="333.0" y="132.4" width="1.2" height="1.2" fill="#ddd"/>
<rect x="349.4" y="144.4" width="1.2" height="1.2" fill="#ddd"/>
<rect x="396.2" y="150.1" width="1.2" height="1.2" fill="#ddd"/>
<rect x="414.4" y="131.9" width="1.2" height="1.2" fill="#ddd"/>
<rect x="421.9" y="136.9" width="1.2" height="1.2" fill="#ddd"/>
<rect x="308.4" y="156.4" width="1.2" height="1.2" fill="#ddd"/>
<rect x="306.8" y="151.2" width="1.2" height="1.2" fill="#ddd"/>
<rect x="324.6" y="168.4" width="1.2" height="1.2" fill="#ddd"/>
<rect x="426.1" y="184.2" width="1.2" height="1.2" fill="#ddd"/>
<rect x="326.4" y="190.9" width="1.2" height="1.2" fill="#ddd"/>
<rect x="342.4" y="207.4" width="1.2" height="1.2" fill="#ddd"/>
<rect x="270.2" y="221.4" width="1.2" height="1.2" fill="#ddd"/>
<rect x="338.2" y="287.7" width="1.2" height="1.2" fill="#ddd"/>
<rect x="417.7" y="272.6" width="1.2" height="1.2" fill="#ddd"/>
<rect x="316.9" y="275.1" width="1.2" height="1.2" fill="#ddd"/>
<rect x="441.8" y="239.1" width="1.2" height="1.2" fill="#ddd"/>
<rect x="425.7" y="211.4" width="1.2" height="1.2" fill="#ddd"/>
<rect x="489.6" y="144.4" width="1.2" height="1.2" fill="#ddd"/>
<rect x="509.9" y="141.4" width="1.2" height="1.2" fill="#ddd"/>
<rect x="470.8" y="188.4" width="1.2" height="1.2" fill="#ddd"/>
<rect x="519.4" y="115.6" width="1.2" height="1.2" fill="#ddd"/>
<rect x="462.0" y="101.6" width="1.2" height="1.2" fill="#ddd"/>
<rect x="501.7" y="116.6" width="1.2" height="1.2" fill="#ddd"/>
<rect x="505.7" y="186.7" width="1.2" height="1.2" fill="#ddd"/>
<rect x="522.7" y="136.9" width="1.2" height="1.2" fill="#ddd"/>
<rect x="479.1" y="148.7" width="1.2" height="1.2" fill="#ddd"/>
<rect x="614.1" y="90.4" width="1.2" height="1.2" fill="#ddd"/>
<rect x="456.1" y="90.1" width="1.2" height="1.2" fill="#ddd"/>
<rect x="509.9" y="91.4" width="1.2" height="1.2" fill="#ddd"/>
<rect x="555.4" y="196.4" width="1.2" height="1.2" fill="#ddd"/>
<rect x="667.0" y="107.2" width="1.2" height="1.2" fill="#ddd"/>
<rect x="672.8" y="115.6" width="1.2" height="1.2" fill="#ddd"/>
<rect x="767.8" y="142.4" width="1.2" height="1.2" fill="#ddd"/>
<rect x="752.7" y="141.4" width="1.2" height="1.2" fill="#ddd"/>
<rect x="744.8" y="157.4" width="1.2" height="1.2" fill="#ddd"/>
<rect x="805.0" y="173.1" width="1.2" height="1.2" fill="#ddd"/>
<rect x="796.3" y="175.8" width="1.2" height="1.2" fill="#ddd"/>
<rect x="730.8" y="187.8" width="1.2" height="1.2" fill="#ddd"/>
<rect x="817.6" y="96.1" width="1.2" height="1.2" fill="#ddd"/>
<rect x="646.4" y="102.6" width="1.2" height="1.2" fill="#ddd"/>
<rect x="722.8" y="92.0" width="1.2" height="1.2" fill="#ddd"/>
<rect x="750.6" y="90.1" width="1.2" height="1.2" fill="#ddd"/>
<rect x="772.6" y="98.9" width="1.2" height="1.2" fill="#ddd"/>
<rect x="792.9" y="122.9" width="1.2" height="1.2" fill="#ddd"/>
<rect x="727.6" y="132.4" width="1.2" height="1.2" fill="#ddd"/>
<rect x="692.1" y="138.6" width="1.2" height="1.2" fill="#ddd"/>
<rect x="688.4" y="109.7" width="1.2" height="1.2" fill="#ddd"/>
<rect x="772.0" y="114.4" width="1.2" height="1.2" fill="#ddd"/>
<rect x="717.6" y="158.4" width="1.2" height="1.2" fill="#ddd"/>
<rect x="728.7" y="198.2" width="1.2" height="1.2" fill="#ddd"/>
<rect x="720.4" y="171.0" width="1.2" height="1.2" fill="#ddd"/>
<rect x="923.0" y="96.9" width="1.2" height="1.2" fill="#ddd"/>
<rect x="923.4" y="105.4" width="1.2" height="1.2" fill="#ddd"/>
<rect x="968.1" y="127.1" width="1.2" height="1.2" fill="#ddd"/>
<rect x="970.6" y="167.5" width="1.2" height="1.2" fill="#ddd"/>
<rect x="1008.1" y="193.7" width="1.2" height="1.2" fill="#ddd"/>
<rect x="1012.8" y="161.8" width="1.2" height="1.2" fill="#ddd"/>
<rect x="1017.4" y="139.4" width="1.2" height="1.2" fill="#ddd"/>
<rect x="875.4" y="188.0" width="1.2" height="1.2" fill="#ddd"/>
<rect x="943.0" y="142.0" width="1.2" height="1.2" fill="#ddd"/>
<rect x="935.1" y="186.7" width="1.2" height="1.2" fill="#ddd"/>
<rect x="947.2" y="193.1" width="1.2" height="1.2" fill="#ddd"/>
<rect x="876.0" y="92.0" width="1.2" height="1.2" fill="#ddd"/>
<rect x="844.9" y="131.0" width="1.2" height="1.2" fill="#ddd"/>
<rect x="894.0" y="125.6" width="1.2" height="1.2" fill="#ddd"/>
<rect x="1007.0" y="128.8" width="1.2" height="1.2" fill="#ddd"/>
<rect x="939.4" y="167.1" width="1.2" height="1.2" fill="#ddd"/>
<rect x="918.7" y="168.8" width="1.2" height="1.2" fill="#ddd"/>
<rect x="909.6" y="194.4" width="1.2" height="1.2" fill="#ddd"/>
<rect x="827.7" y="168.6" width="1.2" height="1.2" fill="#ddd"/>
<rect x="515.1" y="284.1" width="1.2" height="1.2" fill="#ddd"/>
<rect x="528.4" y="241.2" width="1.2" height="1.2" fill="#ddd"/>
<rect x="604.7" y="231.8" width="1.2" height="1.2" fill="#ddd"/>
<rect x="487.9" y="297.4" width="1.2" height="1.2" fill="#ddd"/>
<rect x="441.9" y="239.1" width="1.2" height="1.2" fill="#ddd"/>
<rect x="476.6" y="207.1" width="1.2" height="1.2" fill="#ddd"/>
<rect x="456.8" y="212.6" width="1.2" height="1.2" fill="#ddd"/>
<rect x="562.8" y="261.7" width="1.2" height="1.2" fill="#ddd"/>
<rect x="555.5" y="261.1" width="1.2" height="1.2" fill="#ddd"/>
<rect x="593.2" y="241.9" width="1.2" height="1.2" fill="#ddd"/>
<rect x="508.4" y="254.8" width="1.2" height="1.2" fill="#ddd"/>
<rect x="623.4" y="225.4" width="1.2" height="1.2" fill="#ddd"/>
<rect x="585.8" y="274.3" width="1.2" height="1.2" fill="#ddd"/>
<rect x="732.2" y="214.4" width="1.2" height="1.2" fill="#ddd"/>
<rect x="775.8" y="249.0" width="1.2" height="1.2" fill="#ddd"/>
<rect x="792.4" y="260.7" width="1.2" height="1.2" fill="#ddd"/>
<rect x="772.6" y="277.9" width="1.2" height="1.2" fill="#ddd"/>
<rect x="689.6" y="295.2" width="1.2" height="1.2" fill="#ddd"/>
<rect x="761.1" y="243.4" width="1.2" height="1.2" fill="#ddd"/>
<rect x="769.9" y="207.8" width="1.2" height="1.2" fill="#ddd"/>
<rect x="809.9" y="292.4" width="1.2" height="1.2" fill="#ddd"/>
<rect x="819.7" y="262.2" width="1.2" height="1.2" fill="#ddd"/>
<rect x="933.4" y="238.4" width="1.2" height="1.2" fill="#ddd"/>
<rect x="935.7" y="223.4" width="1.2" height="1.2" fill="#ddd"/>
<rect x="983.0" y="227.1" width="1.2" height="1.2" fill="#ddd"/>
<rect x="952.1" y="256.8" width="1.2" height="1.2" fill="#ddd"/>
<rect x="964.9" y="272.8" width="1.2" height="1.2" fill="#ddd"/>
<rect x="998.4" y="264.9" width="1.2" height="1.2" fill="#ddd"/>
<rect x="845.7" y="282.0" width="1.2" height="1.2" fill="#ddd"/>
<rect x="859.6" y="234.9" width="1.2" height="1.2" fill="#ddd"/>
<rect x="889.8" y="241.5" width="1.2" height="1.2" fill="#ddd"/>
<rect x="1008.9" y="302.2" width="1.2" height="1.2" fill="#ddd"/>
<rect x="835.7" y="307.9" width="1.2" height="1.2" fill="#ddd"/>
<rect x="999.6" y="207.9" width="1.2" height="1.2" fill="#ddd"/>
<rect x="961.7" y="207.3" width="1.2" height="1.2" fill="#ddd"/>
<rect x="278.6" y="336.2" width="1.2" height="1.2" fill="#ddd"/>
<rect x="260.2" y="366.9" width="1.2" height="1.2" fill="#ddd"/>
<rect x="312.4" y="411.3" width="1.2" height="1.2" fill="#ddd"/>
<rect x="405.2" y="368.4" width="1.2" height="1.2" fill="#ddd"/>
<rect x="396.8" y="347.7" width="1.2" height="1.2" fill="#ddd"/>
<rect x="369.6" y="422.4" width="1.2" height="1.2" fill="#ddd"/>
<rect x="430.3" y="421.7" width="1.2" height="1.2" fill="#ddd"/>
<rect x="302.7" y="324.4" width="1.2" height="1.2" fill="#ddd"/>
<rect x="278.6" y="418.2" width="1.2" height="1.2" fill="#ddd"/>
<rect x="325.7" y="372.6" width="1.2" height="1.2" fill="#ddd"/>
<rect x="471.8" y="351.9" width="1.2" height="1.2" fill="#ddd"/>
<rect x="502.2" y="325.7" width="1.2" height="1.2" fill="#ddd"/>
<rect x="484.0" y="317.1" width="1.2" height="1.2" fill="#ddd"/>
<rect x="536.7" y="386.4" width="1.2" height="1.2" fill="#ddd"/>
<rect x="540.4" y="385.1" width="1.2" height="1.2" fill="#ddd"/>
<rect x="471.8" y="388.9" width="1.2" height="1.2" fill="#ddd"/>
<rect x="461.4" y="379.9" width="1.2" height="1.2" fill="#ddd"/>
<rect x="565.6" y="349.6" width="1.2" height="1.2" fill="#ddd"/>
<rect x="593.2" y="349.8" width="1.2" height="1.2" fill="#ddd"/>
<rect x="450.3" y="399.4" width="1.2" height="1.2" fill="#ddd"/>
<rect x="489.0" y="407.3" width="1.2" height="1.2" fill="#ddd"/>
<rect x="790.4" y="320.3" width="1.2" height="1.2" fill="#ddd"/>
<rect x="807.1" y="353.8" width="1.2" height="1.2" fill="#ddd"/>
<rect x="723.0" y="362.7" width="1.2" height="1.2" fill="#ddd"/>
<rect x="778.9" y="318.8" width="1.2" height="1.2" fill="#ddd"/>
<rect x="717.2" y="316.1" width="1.2" height="1.2" fill="#ddd"/>
<rect x="668.4" y="323.0" width="1.2" height="1.2" fill="#ddd"/>
<rect x="794.0" y="411.3" width="1.2" height="1.2" fill="#ddd"/>
<rect x="659.6" y="352.3" width="1.2" height="1.2" fill="#ddd"/>
<rect x="701.9" y="345.0" width="1.2" height="1.2" fill="#ddd"/>
<rect x="873.4" y="324.3" width="1.2" height="1.2" fill="#ddd"/>
<rect x="884.4" y="329.2" width="1.2" height="1.2" fill="#ddd"/>
<rect x="941.1" y="350.9" width="1.2" height="1.2" fill="#ddd"/>
<rect x="957.0" y="369.0" width="1.2" height="1.2" fill="#ddd"/>
<rect x="1008.1" y="321.5" width="1.2" height="1.2" fill="#ddd"/>
<rect x="990.8" y="313.0" width="1.2" height="1.2" fill="#ddd"/>
<rect x="910.6" y="427.4" width="1.2" height="1.2" fill="#ddd"/>
<rect x="286.8" y="536.0" width="1.2" height="1.2" fill="#ddd"/>
<rect x="274.6" y="430.9" width="1.2" height="1.2" fill="#ddd"/>
<rect x="407.4" y="482.4" width="1.2" height="1.2" fill="#ddd"/>
<rect x="324.6" y="535.3" width="1.2" height="1.2" fill="#ddd"/>
<rect x="329.0" y="546.7" width="1.2" height="1.2" fill="#ddd"/>
<rect x="369.7" y="422.4" width="1.2" height="1.2" fill="#ddd"/>
<rect x="386.3" y="434.0" width="1.2" height="1.2" fill="#ddd"/>
<rect x="347.7" y="492.1" width="1.2" height="1.2" fill="#ddd"/>
<rect x="399.4" y="454.0" width="1.2" height="1.2" fill="#ddd"/>
<rect x="499.9" y="485.3" width="1.2" height="1.2" fill="#ddd"/>
<rect x="479.6" y="491.4" width="1.2" height="1.2" fill="#ddd"/>
<rect x="465.7" y="467.7" width="1.2" height="1.2" fill="#ddd"/>
<rect x="573.5" y="424.3" width="1.2" height="1.2" fill="#ddd"/>
<rect x="619.4" y="451.8" width="1.2" height="1.2" fill="#ddd"/>
<rect x="605.3" y="430.9" width="1.2" height="1.2" fill="#ddd"/>
<rect x="557.0" y="459.6" width="1.2" height="1.2" fill="#ddd"/>
<rect x="716.3" y="470.6" width="1.2" height="1.2" fill="#ddd"/>
<rect x="727.0" y="482.8" width="1.2" height="1.2" fill="#ddd"/>
<rect x="649.7" y="458.4" width="1.2" height="1.2" fill="#ddd"/>
<rect x="641.9" y="518.2" width="1.2" height="1.2" fill="#ddd"/>
<rect x="661.9" y="535.3" width="1.2" height="1.2" fill="#ddd"/>
<rect x="694.3" y="508.4" width="1.2" height="1.2" fill="#ddd"/>
<rect x="847.8" y="519.4" width="1.2" height="1.2" fill="#ddd"/>
<rect x="908.8" y="453.5" width="1.2" height="1.2" fill="#ddd"/>
<rect x="941.7" y="519.4" width="1.2" height="1.2" fill="#ddd"/>
<rect x="985.6" y="497.0" width="1.2" height="1.2" fill="#ddd"/>
<rect x="1014.4" y="510.4" width="1.2" height="1.2" fill="#ddd"/>
<rect x="272.6" y="100.8" width="1.2" height="1.2" fill="#ddd"/>
<rect x="303.7" y="108.9" width="1.2" height="1.2" fill="#ddd"/>
<rect x="299.9" y="99.9" width="1.2" height="1.2" fill="#ddd"/>
<rect x="826.6" y="93.1" width="1.2" height="1.2" fill="#ddd"/>
<rect x="904.7" y="99.4" width="1.2" height="1.2" fill="#ddd"/>
<rect x="917.0" y="105.0" width="1.2" height="1.2" fill="#ddd"/>
<rect x="943.6" y="94.8" width="1.2" height="1.2" fill="#ddd"/>
<rect x="962.8" y="91.0" width="1.2" height="1.2" fill="#ddd"/>
<rect x="983.4" y="106.4" width="1.2" height="1.2" fill="#ddd"/>
<rect x="951.1" y="127.8" width="1.2" height="1.2" fill="#ddd"/>
<rect x="923.4" y="131.0" width="1.2" height="1.2" fill="#ddd"/>
<rect x="962.8" y="124.1" width="1.2" height="1.2" fill="#ddd"/>
<rect x="1002.1" y="150.7" width="1.2" height="1.2" fill="#ddd"/>
<rect x="970.2" y="148.6" width="1.2" height="1.2" fill="#ddd"/>
<rect x="896.8" y="160.7" width="1.2" height="1.2" fill="#ddd"/>
<rect x="897.9" y="166.7" width="1.2" height="1.2" fill="#ddd"/>
<rect x="831.9" y="162.9" width="1.2" height="1.2" fill="#ddd"/>
<rect x="830.4" y="175.6" width="1.2" height="1.2" fill="#ddd"/>
<rect x="828.7" y="184.1" width="1.2" height="1.2" fill="#ddd"/>
<rect x="930.2" y="183.7" width="1.2" height="1.2" fill="#ddd"/>
<rect x="985.5" y="178.8" width="1.2" height="1.2" fill="#ddd"/>
<rect x="977.7" y="173.9" width="1.2" height="1.2" fill="#ddd"/>
<rect x="976.6" y="190.1" width="1.2" height="1.2" fill="#ddd"/>
<rect x="1010.2" y="183.1" width="1.2" height="1.2" fill="#ddd"/>
<rect x="961.7" y="207.5" width="1.2" height="1.2" fill="#ddd"/>
<rect x="923.4" y="141.6" width="1.2" height="1.2" fill="#ddd"/>
<rect x="290.1" y="203.0" width="1.2" height="1.2" fill="#ddd"/>
<rect x="308.9" y="201.1" width="1.2" height="1.2" fill="#ddd"/>
<rect x="276.5" y="212.4" width="1.2" height="1.2" fill="#ddd"/>
<rect x="256.6" y="222.8" width="1.2" height="1.2" fill="#ddd"/>
<rect x="283.8" y="223.9" width="1.2" height="1.2" fill="#ddd"/>
<rect x="299.9" y="226.6" width="1.2" height="1.2" fill="#ddd"/>
<rect x="312.1" y="227.6" width="1.2" height="1.2" fill="#ddd"/>
<rect x="259.8" y="228.7" width="1.2" height="1.2" fill="#ddd"/>
<rect x="264.0" y="233.9" width="1.2" height="1.2" fill="#ddd"/>
<rect x="296.0" y="236.6" width="1.2" height="1.2" fill="#ddd"/>
<rect x="270.6" y="238.7" width="1.2" height="1.2" fill="#ddd"/>
<rect x="253.1" y="250.7" width="1.2" height="1.2" fill="#ddd"/>
<rect x="307.9" y="253.4" width="1.2" height="1.2" fill="#ddd"/>
<rect x="308.9" y="256.9" width="1.2" height="1.2" fill="#ddd"/>
<rect x="336.1" y="245.0" width="1.2" height="1.2" fill="#ddd"/>
<rect x="350.1" y="227.6" width="1.2" height="1.2" fill="#ddd"/>
<rect x="352.9" y="215.1" width="1.2" height="1.2" fill="#ddd"/>
<rect x="360.8" y="205.7" width="1.2" height="1.2" fill="#ddd"/>
<rect x="378.6" y="215.1" width="1.2" height="1.2" fill="#ddd"/>
<rect x="395.3" y="201.1" width="1.2" height="1.2" fill="#ddd"/>
<rect x="407.3" y="201.5" width="1.2" height="1.2" fill="#ddd"/>
<rect x="439.7" y="212.0" width="1.2" height="1.2" fill="#ddd"/>
<rect x="389.9" y="262.2" width="1.2" height="1.2" fill="#ddd"/>
<rect x="365.8" y="269.1" width="1.2" height="1.2" fill="#ddd"/>
<rect x="336.8" y="271.2" width="1.2" height="1.2" fill="#ddd"/>
<rect x="350.4" y="275.8" width="1.2" height="1.2" fill="#ddd"/>
<rect x="297.8" y="301.9" width="1.2" height="1.2" fill="#ddd"/>
<rect x="353.9" y="300.9" width="1.2" height="1.2" fill="#ddd"/>
<rect x="414.2" y="292.9" width="1.2" height="1.2" fill="#ddd"/>
<rect x="269.8" y="310.3" width="1.2" height="1.2" fill="#ddd"/>
<rect x="329.9" y="309.2" width="1.2" height="1.2" fill="#ddd"/>
<rect x="414.6" y="313.0" width="1.2" height="1.2" fill="#ddd"/>
<rect x="428.8" y="313.0" width="1.2" height="1.2" fill="#ddd"/>
<rect x="441.8" y="314.5" width="1.2" height="1.2" fill="#ddd"/>
<rect x="269.2" y="318.6" width="1.2" height="1.2" fill="#ddd"/>
<rect x="338.2" y="324.5" width="1.2" height="1.2" fill="#ddd"/>
<rect x="327.1" y="329.9" width="1.2" height="1.2" fill="#ddd"/>
<rect x="360.2" y="339.1" width="1.2" height="1.2" fill="#ddd"/>
<rect x="262.3" y="345.4" width="1.2" height="1.2" fill="#ddd"/>
<rect x="259.4" y="349.6" width="1.2" height="1.2" fill="#ddd"/>
<rect x="344.5" y="355.0" width="1.2" height="1.2" fill="#ddd"/>
<rect x="312.1" y="359.6" width="1.2" height="1.2" fill="#ddd"/>
<rect x="332.6" y="360.2" width="1.2" height="1.2" fill="#ddd"/>
<rect x="280.7" y="362.7" width="1.2" height="1.2" fill="#ddd"/>
<rect x="362.7" y="362.3" width="1.2" height="1.2" fill="#ddd"/>
<rect x="257.7" y="370.1" width="1.2" height="1.2" fill="#ddd"/>
<rect x="328.4" y="371.7" width="1.2" height="1.2" fill="#ddd"/>
<rect x="264.4" y="387.4" width="1.2" height="1.2" fill="#ddd"/>
<rect x="276.9" y="390.6" width="1.2" height="1.2" fill="#ddd"/>
<rect x="267.7" y="399.8" width="1.2" height="1.2" fill="#ddd"/>
<rect x="257.7" y="406.1" width="1.2" height="1.2" fill="#ddd"/>
<rect x="269.8" y="406.1" width="1.2" height="1.2" fill="#ddd"/>
<rect x="369.0" y="404.0" width="1.2" height="1.2" fill="#ddd"/>
<rect x="255.2" y="417.8" width="1.2" height="1.2" fill="#ddd"/>
<rect x="400.4" y="418.2" width="1.2" height="1.2" fill="#ddd"/>
<rect x="306.8" y="425.5" width="1.2" height="1.2" fill="#ddd"/>
<rect x="396.8" y="337.6" width="1.2" height="1.2" fill="#ddd"/>
<rect x="430.3" y="327.8" width="1.2" height="1.2" fill="#ddd"/>
<rect x="429.6" y="362.7" width="1.2" height="1.2" fill="#ddd"/>
<rect x="473.5" y="99.9" width="1.2" height="1.2" fill="#ddd"/>
<rect x="476.6" y="101.4" width="1.2" height="1.2" fill="#ddd"/>
<rect x="479.6" y="110.4" width="1.2" height="1.2" fill="#ddd"/>
<rect x="483.8" y="110.4" width="1.2" height="1.2" fill="#ddd"/>
<rect x="487.1" y="109.7" width="1.2" height="1.2" fill="#ddd"/>
<rect x="476.0" y="115.2" width="1.2" height="1.2" fill="#ddd"/>
<rect x="456.8" y="121.4" width="1.2" height="1.2" fill="#ddd"/>
<rect x="541.5" y="104.7" width="1.2" height="1.2" fill="#ddd"/>
<rect x="552.8" y="103.0" width="1.2" height="1.2" fill="#ddd"/>
<rect x="552.4" y="106.2" width="1.2" height="1.2" fill="#ddd"/>
<rect x="557.6" y="136.9" width="1.2" height="1.2" fill="#ddd"/>
<rect x="575.0" y="136.1" width="1.2" height="1.2" fill="#ddd"/>
<rect x="547.8" y="164.1" width="1.2" height="1.2" fill="#ddd"/>
<rect x="554.0" y="167.9" width="1.2" height="1.2" fill="#ddd"/>
<rect x="559.1" y="166.2" width="1.2" height="1.2" fill="#ddd"/>
<rect x="560.3" y="170.4" width="1.2" height="1.2" fill="#ddd"/>
<rect x="558.6" y="178.4" width="1.2" height="1.2" fill="#ddd"/>
<rect x="564.5" y="180.9" width="1.2" height="1.2" fill="#ddd"/>
<rect x="501.3" y="176.3" width="1.2" height="1.2" fill="#ddd"/>
<rect x="489.0" y="185.1" width="1.2" height="1.2" fill="#ddd"/>
<rect x="585.8" y="179.0" width="1.2" height="1.2" fill="#ddd"/>
<rect x="591.1" y="161.6" width="1.2" height="1.2" fill="#ddd"/>
<rect x="595.3" y="151.2" width="1.2" height="1.2" fill="#ddd"/>
<rect x="447.8" y="194.7" width="1.2" height="1.2" fill="#ddd"/>
<rect x="546.1" y="202.0" width="1.2" height="1.2" fill="#ddd"/>
<rect x="476.6" y="207.2" width="1.2" height="1.2" fill="#ddd"/>
<rect x="521.6" y="90.1" width="1.2" height="1.2" fill="#ddd"/>
<rect x="450.9" y="251.7" width="1.2" height="1.2" fill="#ddd"/>
<rect x="453.0" y="254.2" width="1.2" height="1.2" fill="#ddd"/>
<rect x="470.8" y="274.3" width="1.2" height="1.2" fill="#ddd"/>
<rect x="489.0" y="275.8" width="1.2" height="1.2" fill="#ddd"/>
<rect x="458.2" y="284.8" width="1.2" height="1.2" fill="#ddd"/>
<rect x="483.3" y="311.3" width="1.2" height="1.2" fill="#ddd"/>
<rect x="441.9" y="314.0" width="1.2" height="1.2" fill="#ddd"/>
<rect x="532.5" y="293.5" width="1.2" height="1.2" fill="#ddd"/>
<rect x="540.9" y="309.7" width="1.2" height="1.2" fill="#ddd"/>
<rect x="519.9" y="305.0" width="1.2" height="1.2" fill="#ddd"/>
<rect x="513.7" y="312.4" width="1.2" height="1.2" fill="#ddd"/>
<rect x="515.8" y="247.1" width="1.2" height="1.2" fill="#ddd"/>
<rect x="517.2" y="249.0" width="1.2" height="1.2" fill="#ddd"/>
<rect x="575.0" y="212.4" width="1.2" height="1.2" fill="#ddd"/>
<rect x="580.0" y="217.8" width="1.2" height="1.2" fill="#ddd"/>
<rect x="619.3" y="228.7" width="1.2" height="1.2" fill="#ddd"/>
<rect x="624.5" y="226.6" width="1.2" height="1.2" fill="#ddd"/>
<rect x="612.6" y="239.1" width="1.2" height="1.2" fill="#ddd"/>
<rect x="585.8" y="251.7" width="1.2" height="1.2" fill="#ddd"/>
<rect x="598.0" y="284.1" width="1.2" height="1.2" fill="#ddd"/>
<rect x="585.8" y="290.4" width="1.2" height="1.2" fill="#ddd"/>
<rect x="606.1" y="303.6" width="1.2" height="1.2" fill="#ddd"/>
<rect x="594.2" y="313.4" width="1.2" height="1.2" fill="#ddd"/>
<rect x="575.4" y="314.5" width="1.2" height="1.2" fill="#ddd"/>
<rect x="639.8" y="206.7" width="1.2" height="1.2" fill="#ddd"/>
<rect x="667.0" y="202.5" width="1.2" height="1.2" fill="#ddd"/>
<rect x="720.9" y="201.9" width="1.2" height="1.2" fill="#ddd"/>
<rect x="727.6" y="209.4" width="1.2" height="1.2" fill="#ddd"/>
<rect x="684.7" y="215.1" width="1.2" height="1.2" fill="#ddd"/>
<rect x="699.4" y="215.5" width="1.2" height="1.2" fill="#ddd"/>
<rect x="673.9" y="229.3" width="1.2" height="1.2" fill="#ddd"/>
<rect x="717.8" y="230.4" width="1.2" height="1.2" fill="#ddd"/>
<rect x="640.8" y="252.7" width="1.2" height="1.2" fill="#ddd"/>
<rect x="678.5" y="261.1" width="1.2" height="1.2" fill="#ddd"/>
<rect x="713.6" y="265.9" width="1.2" height="1.2" fill="#ddd"/>
<rect x="726.0" y="267.4" width="1.2" height="1.2" fill="#ddd"/>
<rect x="722.8" y="278.5" width="1.2" height="1.2" fill="#ddd"/>
<rect x="634.5" y="291.4" width="1.2" height="1.2" fill="#ddd"/>
<rect x="640.8" y="289.8" width="1.2" height="1.2" fill="#ddd"/>
<rect x="657.6" y="294.0" width="1.2" height="1.2" fill="#ddd"/>
<rect x="661.7" y="296.7" width="1.2" height="1.2" fill="#ddd"/>
<rect x="703.6" y="310.3" width="1.2" height="1.2" fill="#ddd"/>
<rect x="777.8" y="269.5" width="1.2" height="1.2" fill="#ddd"/>
<rect x="806.1" y="219.7" width="1.2" height="1.2" fill="#ddd"/>
<rect x="803.4" y="226.6" width="1.2" height="1.2" fill="#ddd"/>
<rect x="818.0" y="255.5" width="1.2" height="1.2" fill="#ddd"/>
<rect x="810.3" y="309.2" width="1.2" height="1.2" fill="#ddd"/>
<rect x="845.7" y="210.5" width="1.2" height="1.2" fill="#ddd"/>
<rect x="842.1" y="216.0" width="1.2" height="1.2" fill="#ddd"/>
<rect x="831.9" y="219.6" width="1.2" height="1.2" fill="#ddd"/>
<rect x="830.8" y="228.8" width="1.2" height="1.2" fill="#ddd"/>
<rect x="831.5" y="239.8" width="1.2" height="1.2" fill="#ddd"/>
<rect x="872.8" y="245.1" width="1.2" height="1.2" fill="#ddd"/>
<rect x="897.9" y="245.8" width="1.2" height="1.2" fill="#ddd"/>
<rect x="911.7" y="233.4" width="1.2" height="1.2" fill="#ddd"/>
<rect x="860.6" y="253.7" width="1.2" height="1.2" fill="#ddd"/>
<rect x="843.6" y="260.0" width="1.2" height="1.2" fill="#ddd"/>
<rect x="848.9" y="259.4" width="1.2" height="1.2" fill="#ddd"/>
<rect x="848.9" y="274.9" width="1.2" height="1.2" fill="#ddd"/>
<rect x="867.7" y="277.1" width="1.2" height="1.2" fill="#ddd"/>
<rect x="944.3" y="217.5" width="1.2" height="1.2" fill="#ddd"/>
<rect x="933.6" y="231.7" width="1.2" height="1.2" fill="#ddd"/>
<rect x="943.0" y="242.4" width="1.2" height="1.2" fill="#ddd"/>
<rect x="952.8" y="253.7" width="1.2" height="1.2" fill="#ddd"/>
<rect x="983.4" y="277.7" width="1.2" height="1.2" fill="#ddd"/>
<rect x="936.6" y="300.5" width="1.2" height="1.2" fill="#ddd"/>
<rect x="942.1" y="308.5" width="1.2" height="1.2" fill="#ddd"/>
<rect x="962.8" y="310.0" width="1.2" height="1.2" fill="#ddd"/>
<rect x="880.4" y="312.8" width="1.2" height="1.2" fill="#ddd"/>
<rect x="905.3" y="316.0" width="1.2" height="1.2" fill="#ddd"/>
<rect x="959.1" y="317.5" width="1.2" height="1.2" fill="#ddd"/>
<rect x="990.4" y="313.2" width="1.2" height="1.2" fill="#ddd"/>
<rect x="895.1" y="329.0" width="1.2" height="1.2" fill="#ddd"/>
<rect x="837.9" y="346.0" width="1.2" height="1.2" fill="#ddd"/>
<rect x="921.7" y="342.8" width="1.2" height="1.2" fill="#ddd"/>
<rect x="957.0" y="336.6" width="1.2" height="1.2" fill="#ddd"/>
<rect x="963.8" y="344.1" width="1.2" height="1.2" fill="#ddd"/>
<rect x="962.1" y="347.7" width="1.2" height="1.2" fill="#ddd"/>
<rect x="851.1" y="357.9" width="1.2" height="1.2" fill="#ddd"/>
<rect x="927.7" y="357.9" width="1.2" height="1.2" fill="#ddd"/>
<rect x="1002.1" y="357.9" width="1.2" height="1.2" fill="#ddd"/>
<rect x="851.5" y="365.4" width="1.2" height="1.2" fill="#ddd"/>
<rect x="921.3" y="366.8" width="1.2" height="1.2" fill="#ddd"/>
<rect x="917.7" y="371.1" width="1.2" height="1.2" fill="#ddd"/>
<rect x="935.7" y="374.9" width="1.2" height="1.2" fill="#ddd"/>
<rect x="986.8" y="364.7" width="1.2" height="1.2" fill="#ddd"/>
<rect x="872.8" y="370.7" width="1.2" height="1.2" fill="#ddd"/>
<rect x="857.4" y="377.5" width="1.2" height="1.2" fill="#ddd"/>
<rect x="970.6" y="378.1" width="1.2" height="1.2" fill="#ddd"/>
<rect x="826.0" y="384.5" width="1.2" height="1.2" fill="#ddd"/>
<rect x="875.5" y="383.9" width="1.2" height="1.2" fill="#ddd"/>
<rect x="895.3" y="383.9" width="1.2" height="1.2" fill="#ddd"/>
<rect x="850.0" y="392.8" width="1.2" height="1.2" fill="#ddd"/>
<rect x="859.6" y="394.1" width="1.2" height="1.2" fill="#ddd"/>
<rect x="893.2" y="392.8" width="1.2" height="1.2" fill="#ddd"/>
<rect x="893.6" y="396.6" width="1.2" height="1.2" fill="#ddd"/>
<rect x="929.1" y="394.9" width="1.2" height="1.2" fill="#ddd"/>
<rect x="855.3" y="409.8" width="1.2" height="1.2" fill="#ddd"/>
<rect x="866.0" y="415.8" width="1.2" height="1.2" fill="#ddd"/>
<rect x="892.5" y="410.5" width="1.2" height="1.2" fill="#ddd"/>
<rect x="898.3" y="421.1" width="1.2" height="1.2" fill="#ddd"/>
<rect x="900.4" y="424.7" width="1.2" height="1.2" fill="#ddd"/>
<rect x="910.2" y="423.2" width="1.2" height="1.2" fill="#ddd"/>
<rect x="1003.8" y="410.0" width="1.2" height="1.2" fill="#ddd"/>
<rect x="995.3" y="417.9" width="1.2" height="1.2" fill="#ddd"/>
<rect x="950.6" y="429.6" width="1.2" height="1.2" fill="#ddd"/>
<rect x="553.4" y="324.5" width="1.2" height="1.2" fill="#ddd"/>
<rect x="560.7" y="326.1" width="1.2" height="1.2" fill="#ddd"/>
<rect x="562.8" y="319.4" width="1.2" height="1.2" fill="#ddd"/>
<rect x="584.8" y="323.0" width="1.2" height="1.2" fill="#ddd"/>
<rect x="613.0" y="314.6" width="1.2" height="1.2" fill="#ddd"/>
<rect x="613.0" y="328.2" width="1.2" height="1.2" fill="#ddd"/>
<rect x="547.1" y="339.7" width="1.2" height="1.2" fill="#ddd"/>
<rect x="551.3" y="336.2" width="1.2" height="1.2" fill="#ddd"/>
<rect x="510.1" y="340.8" width="1.2" height="1.2" fill="#ddd"/>
<rect x="520.6" y="350.8" width="1.2" height="1.2" fill="#ddd"/>
<rect x="613.4" y="343.3" width="1.2" height="1.2" fill="#ddd"/>
<rect x="623.5" y="336.6" width="1.2" height="1.2" fill="#ddd"/>
<rect x="628.7" y="357.5" width="1.2" height="1.2" fill="#ddd"/>
<rect x="587.9" y="359.6" width="1.2" height="1.2" fill="#ddd"/>
<rect x="553.4" y="371.7" width="1.2" height="1.2" fill="#ddd"/>
<rect x="573.3" y="391.6" width="1.2" height="1.2" fill="#ddd"/>
<rect x="500.1" y="407.7" width="1.2" height="1.2" fill="#ddd"/>
<rect x="516.8" y="406.1" width="1.2" height="1.2" fill="#ddd"/>
<rect x="671.6" y="324.5" width="1.2" height="1.2" fill="#ddd"/>
<rect x="663.8" y="327.8" width="1.2" height="1.2" fill="#ddd"/>
<rect x="645.0" y="349.1" width="1.2" height="1.2" fill="#ddd"/>
<rect x="635.2" y="352.3" width="1.2" height="1.2" fill="#ddd"/>
<rect x="669.1" y="355.0" width="1.2" height="1.2" fill="#ddd"/>
<rect x="704.6" y="362.3" width="1.2" height="1.2" fill="#ddd"/>
<rect x="718.8" y="370.1" width="1.2" height="1.2" fill="#ddd"/>
<rect x="733.9" y="382.0" width="1.2" height="1.2" fill="#ddd"/>
<rect x="691.0" y="401.4" width="1.2" height="1.2" fill="#ddd"/>
<rect x="754.8" y="405.6" width="1.2" height="1.2" fill="#ddd"/>
<rect x="756.9" y="387.9" width="1.2" height="1.2" fill="#ddd"/>
<rect x="760.1" y="357.1" width="1.2" height="1.2" fill="#ddd"/>
<rect x="771.6" y="334.1" width="1.2" height="1.2" fill="#ddd"/>
<rect x="786.2" y="336.2" width="1.2" height="1.2" fill="#ddd"/>
<rect x="767.0" y="316.7" width="1.2" height="1.2" fill="#ddd"/>
<rect x="818.2" y="365.5" width="1.2" height="1.2" fill="#ddd"/>
<rect x="319.2" y="429.6" width="1.2" height="1.2" fill="#ddd"/>
<rect x="268.0" y="438.9" width="1.2" height="1.2" fill="#ddd"/>
<rect x="392.9" y="434.0" width="1.2" height="1.2" fill="#ddd"/>
<rect x="334.8" y="454.0" width="1.2" height="1.2" fill="#ddd"/>
<rect x="289.9" y="468.7" width="1.2" height="1.2" fill="#ddd"/>
<rect x="344.6" y="470.1" width="1.2" height="1.2" fill="#ddd"/>
<rect x="364.8" y="475.0" width="1.2" height="1.2" fill="#ddd"/>
<rect x="319.7" y="498.7" width="1.2" height="1.2" fill="#ddd"/>
<rect x="330.7" y="502.3" width="1.2" height="1.2" fill="#ddd"/>
<rect x="350.2" y="504.3" width="1.2" height="1.2" fill="#ddd"/>
<rect x="416.0" y="472.6" width="1.2" height="1.2" fill="#ddd"/>
<rect x="423.4" y="476.0" width="1.2" height="1.2" fill="#ddd"/>
<rect x="433.1" y="471.8" width="1.2" height="1.2" fill="#ddd"/>
<rect x="410.4" y="498.2" width="1.2" height="1.2" fill="#ddd"/>
<rect x="434.3" y="504.8" width="1.2" height="1.2" fill="#ddd"/>
<rect x="402.1" y="514.5" width="1.2" height="1.2" fill="#ddd"/>
<rect x="422.9" y="519.4" width="1.2" height="1.2" fill="#ddd"/>
<rect x="432.6" y="528.7" width="1.2" height="1.2" fill="#ddd"/>
<rect x="406.3" y="539.4" width="1.2" height="1.2" fill="#ddd"/>
<rect x="436.0" y="544.5" width="1.2" height="1.2" fill="#ddd"/>
<rect x="260.4" y="537.0" width="1.2" height="1.2" fill="#ddd"/>
<rect x="526.7" y="440.9" width="1.2" height="1.2" fill="#ddd"/>
<rect x="538.9" y="443.1" width="1.2" height="1.2" fill="#ddd"/>
<rect x="561.4" y="438.4" width="1.2" height="1.2" fill="#ddd"/>
<rect x="509.6" y="444.5" width="1.2" height="1.2" fill="#ddd"/>
<rect x="498.4" y="451.1" width="1.2" height="1.2" fill="#ddd"/>
<rect x="469.9" y="450.6" width="1.2" height="1.2" fill="#ddd"/>
<rect x="461.4" y="454.3" width="1.2" height="1.2" fill="#ddd"/>
<rect x="473.5" y="462.8" width="1.2" height="1.2" fill="#ddd"/>
<rect x="481.4" y="458.9" width="1.2" height="1.2" fill="#ddd"/>
<rect x="488.2" y="467.0" width="1.2" height="1.2" fill="#ddd"/>
<rect x="530.1" y="462.8" width="1.2" height="1.2" fill="#ddd"/>
<rect x="538.2" y="465.3" width="1.2" height="1.2" fill="#ddd"/>
<rect x="580.9" y="468.2" width="1.2" height="1.2" fill="#ddd"/>
<rect x="588.9" y="465.3" width="1.2" height="1.2" fill="#ddd"/>
<rect x="613.8" y="454.8" width="1.2" height="1.2" fill="#ddd"/>
<rect x="502.8" y="483.5" width="1.2" height="1.2" fill="#ddd"/>
<rect x="517.9" y="485.3" width="1.2" height="1.2" fill="#ddd"/>
<rect x="544.8" y="499.4" width="1.2" height="1.2" fill="#ddd"/>
<rect x="452.8" y="506.0" width="1.2" height="1.2" fill="#ddd"/>
<rect x="536.5" y="516.5" width="1.2" height="1.2" fill="#ddd"/>
<rect x="502.3" y="532.8" width="1.2" height="1.2" fill="#ddd"/>
<rect x="529.2" y="532.8" width="1.2" height="1.2" fill="#ddd"/>
<rect x="573.5" y="526.2" width="1.2" height="1.2" fill="#ddd"/>
<rect x="552.1" y="538.2" width="1.2" height="1.2" fill="#ddd"/>
<rect x="575.3" y="545.0" width="1.2" height="1.2" fill="#ddd"/>
<rect x="521.1" y="546.7" width="1.2" height="1.2" fill="#ddd"/>
<rect x="502.8" y="556.0" width="1.2" height="1.2" fill="#ddd"/>
<rect x="585.3" y="442.6" width="1.2" height="1.2" fill="#ddd"/>
<rect x="681.4" y="458.4" width="1.2" height="1.2" fill="#ddd"/>
<rect x="677.7" y="470.6" width="1.2" height="1.2" fill="#ddd"/>
<rect x="736.8" y="471.4" width="1.2" height="1.2" fill="#ddd"/>
<rect x="758.7" y="467.0" width="1.2" height="1.2" fill="#ddd"/>
<rect x="710.7" y="490.6" width="1.2" height="1.2" fill="#ddd"/>
<rect x="749.7" y="498.7" width="1.2" height="1.2" fill="#ddd"/>
<rect x="776.5" y="498.7" width="1.2" height="1.2" fill="#ddd"/>
<rect x="774.8" y="504.0" width="1.2" height="1.2" fill="#ddd"/>
<rect x="795.3" y="502.3" width="1.2" height="1.2" fill="#ddd"/>
<rect x="660.7" y="506.7" width="1.2" height="1.2" fill="#ddd"/>
<rect x="679.7" y="510.1" width="1.2" height="1.2" fill="#ddd"/>
<rect x="697.7" y="512.6" width="1.2" height="1.2" fill="#ddd"/>
<rect x="712.4" y="528.7" width="1.2" height="1.2" fill="#ddd"/>
<rect x="734.3" y="524.8" width="1.2" height="1.2" fill="#ddd"/>
<rect x="738.0" y="529.2" width="1.2" height="1.2" fill="#ddd"/>
<rect x="782.1" y="530.4" width="1.2" height="1.2" fill="#ddd"/>
<rect x="804.1" y="523.8" width="1.2" height="1.2" fill="#ddd"/>
<rect x="806.5" y="524.8" width="1.2" height="1.2" fill="#ddd"/>
<rect x="818.0" y="523.1" width="1.2" height="1.2" fill="#ddd"/>
<rect x="755.8" y="548.7" width="1.2" height="1.2" fill="#ddd"/>
<rect x="772.9" y="554.3" width="1.2" height="1.2" fill="#ddd"/>
<rect x="913.6" y="432.1" width="1.2" height="1.2" fill="#ddd"/>
<rect x="928.8" y="440.1" width="1.2" height="1.2" fill="#ddd"/>
<rect x="923.9" y="444.5" width="1.2" height="1.2" fill="#ddd"/>
<rect x="961.2" y="452.3" width="1.2" height="1.2" fill="#ddd"/>
<rect x="966.1" y="448.2" width="1.2" height="1.2" fill="#ddd"/>
<rect x="940.5" y="456.0" width="1.2" height="1.2" fill="#ddd"/>
<rect x="995.4" y="441.8" width="1.2" height="1.2" fill="#ddd"/>
<rect x="1010.0" y="434.5" width="1.2" height="1.2" fill="#ddd"/>
<rect x="883.2" y="467.7" width="1.2" height="1.2" fill="#ddd"/>
<rect x="869.7" y="480.9" width="1.2" height="1.2" fill="#ddd"/>
<rect x="887.3" y="483.3" width="1.2" height="1.2" fill="#ddd"/>
<rect x="888.8" y="485.7" width="1.2" height="1.2" fill="#ddd"/>
<rect x="831.2" y="482.8" width="1.2" height="1.2" fill="#ddd"/>
<rect x="868.5" y="501.8" width="1.2" height="1.2" fill="#ddd"/>
<rect x="952.2" y="492.6" width="1.2" height="1.2" fill="#ddd"/>
<rect x="965.4" y="471.8" width="1.2" height="1.2" fill="#ddd"/>
<rect x="980.7" y="479.9" width="1.2" height="1.2" fill="#ddd"/>
<rect x="985.6" y="482.3" width="1.2" height="1.2" fill="#ddd"/>
<rect x="999.0" y="482.3" width="1.2" height="1.2" fill="#ddd"/>
<rect x="996.1" y="504.8" width="1.2" height="1.2" fill="#ddd"/>
<rect x="872.2" y="520.6" width="1.2" height="1.2" fill="#ddd"/>
<rect x="830.7" y="526.0" width="1.2" height="1.2" fill="#ddd"/>
<rect x="847.8" y="529.6" width="1.2" height="1.2" fill="#ddd"/>
<rect x="914.1" y="526.7" width="1.2" height="1.2" fill="#ddd"/>
<rect x="913.6" y="530.4" width="1.2" height="1.2" fill="#ddd"/>
<rect x="955.6" y="524.8" width="1.2" height="1.2" fill="#ddd"/>
<rect x="836.1" y="537.0" width="1.2" height="1.2" fill="#ddd"/>
<rect x="894.1" y="538.2" width="1.2" height="1.2" fill="#ddd"/>
<rect x="919.0" y="538.9" width="1.2" height="1.2" fill="#ddd"/>
<rect x="894.1" y="545.5" width="1.2" height="1.2" fill="#ddd"/>
<rect x="904.4" y="543.8" width="1.2" height="1.2" fill="#ddd"/>
<rect x="962.4" y="537.7" width="1.2" height="1.2" fill="#ddd"/>
<rect x="986.1" y="539.4" width="1.2" height="1.2" fill="#ddd"/>
<rect x="1014.1" y="539.4" width="1.2" height="1.2" fill="#ddd"/>
<rect x="964.4" y="555.5" width="1.2" height="1.2" fill="#ddd"/>
<rect x="1016.1" y="519.4" width="1.2" height="1.2" fill="#ddd"/>
<rect x="639.8" y="95.7" width="1.2" height="1.2" fill="#ddd"/>
<rect x="667.0" y="95.7" width="1.2" height="1.2" fill="#ddd"/>
<rect x="680.6" y="94.7" width="1.2" height="1.2" fill="#ddd"/>
<rect x="689.6" y="96.4" width="1.2" height="1.2" fill="#ddd"/>
<rect x="715.1" y="95.1" width="1.2" height="1.2" fill="#ddd"/>
<rect x="646.5" y="104.1" width="1.2" height="1.2" fill="#ddd"/>
<rect x="674.9" y="112.5" width="1.2" height="1.2" fill="#ddd"/>
<rect x="713.0" y="111.4" width="1.2" height="1.2" fill="#ddd"/>
<rect x="708.4" y="119.8" width="1.2" height="1.2" fill="#ddd"/>
<rect x="725.5" y="125.6" width="1.2" height="1.2" fill="#ddd"/>
<rect x="728.7" y="125.6" width="1.2" height="1.2" fill="#ddd"/>
<rect x="776.8" y="124.0" width="1.2" height="1.2" fill="#ddd"/>
<rect x="667.4" y="120.8" width="1.2" height="1.2" fill="#ddd"/>
<rect x="677.8" y="144.5" width="1.2" height="1.2" fill="#ddd"/>
<rect x="667.4" y="172.1" width="1.2" height="1.2" fill="#ddd"/>
<rect x="667.0" y="181.9" width="1.2" height="1.2" fill="#ddd"/>
<rect x="633.5" y="179.8" width="1.2" height="1.2" fill="#ddd"/>
<rect x="637.3" y="180.9" width="1.2" height="1.2" fill="#ddd"/>
<rect x="643.3" y="192.0" width="1.2" height="1.2" fill="#ddd"/>
<rect x="737.7" y="160.2" width="1.2" height="1.2" fill="#ddd"/>
<rect x="751.1" y="166.9" width="1.2" height="1.2" fill="#ddd"/>
<rect x="765.7" y="152.8" width="1.2" height="1.2" fill="#ddd"/>
<rect x="767.0" y="155.8" width="1.2" height="1.2" fill="#ddd"/>
<rect x="779.9" y="172.7" width="1.2" height="1.2" fill="#ddd"/>
<rect x="777.8" y="176.9" width="1.2" height="1.2" fill="#ddd"/>
<rect x="754.8" y="195.1" width="1.2" height="1.2" fill="#ddd"/>
<rect x="737.7" y="197.6" width="1.2" height="1.2" fill="#ddd"/>
<rect x="719.3" y="194.0" width="1.2" height="1.2" fill="#ddd"/>
<rect x="719.9" y="202.4" width="1.2" height="1.2" fill="#ddd"/>
<rect x="733.5" y="196.1" width="1.2" height="1.2" fill="#ddd"/>
<rect x="667.0" y="202.4" width="1.2" height="1.2" fill="#ddd"/>
<rect x="638.7" y="206.6" width="1.2" height="1.2" fill="#ddd"/>
<rect x="311.0" y="90.9" width="1.2" height="1.2" fill="#ddd"/>
<rect x="352.9" y="89.4" width="1.2" height="1.2" fill="#ddd"/>
<rect x="358.1" y="101.4" width="1.2" height="1.2" fill="#ddd"/>
<rect x="368.1" y="111.0" width="1.2" height="1.2" fill="#ddd"/>
<rect x="364.8" y="106.8" width="1.2" height="1.2" fill="#ddd"/>
<rect x="396.8" y="124.0" width="1.2" height="1.2" fill="#ddd"/>
<rect x="399.5" y="126.1" width="1.2" height="1.2" fill="#ddd"/>
<rect x="369.6" y="117.7" width="1.2" height="1.2" fill="#ddd"/>
<rect x="371.7" y="119.4" width="1.2" height="1.2" fill="#ddd"/>
<rect x="383.2" y="125.0" width="1.2" height="1.2" fill="#ddd"/>
<rect x="414.6" y="126.1" width="1.2" height="1.2" fill="#ddd"/>
<rect x="417.7" y="117.7" width="1.2" height="1.2" fill="#ddd"/>
<rect x="428.8" y="124.4" width="1.2" height="1.2" fill="#ddd"/>
<rect x="433.4" y="138.6" width="1.2" height="1.2" fill="#ddd"/>
<rect x="430.3" y="142.8" width="1.2" height="1.2" fill="#ddd"/>
<rect x="394.7" y="132.3" width="1.2" height="1.2" fill="#ddd"/>
<rect x="322.5" y="124.4" width="1.2" height="1.2" fill="#ddd"/>
<rect x="301.6" y="138.6" width="1.2" height="1.2" fill="#ddd"/>
<rect x="303.7" y="142.4" width="1.2" height="1.2" fill="#ddd"/>
<rect x="315.2" y="142.4" width="1.2" height="1.2" fill="#ddd"/>
<rect x="295.3" y="151.8" width="1.2" height="1.2" fill="#ddd"/>
<rect x="298.5" y="168.9" width="1.2" height="1.2" fill="#ddd"/>
<rect x="301.6" y="172.1" width="1.2" height="1.2" fill="#ddd"/>
<rect x="336.1" y="168.9" width="1.2" height="1.2" fill="#ddd"/>
<rect x="328.8" y="166.9" width="1.2" height="1.2" fill="#ddd"/>
<rect x="360.2" y="168.3" width="1.2" height="1.2" fill="#ddd"/>
<rect x="365.4" y="149.1" width="1.2" height="1.2" fill="#ddd"/>
<rect x="365.4" y="145.9" width="1.2" height="1.2" fill="#ddd"/>
<rect x="388.4" y="162.7" width="1.2" height="1.2" fill="#ddd"/>
<rect x="390.5" y="165.8" width="1.2" height="1.2" fill="#ddd"/>
<rect x="401.0" y="154.9" width="1.2" height="1.2" fill="#ddd"/>
<rect x="397.8" y="195.1" width="1.2" height="1.2" fill="#ddd"/>
<rect x="409.4" y="198.2" width="1.2" height="1.2" fill="#ddd"/>
<rect x="406.2" y="202.4" width="1.2" height="1.2" fill="#ddd"/>
<rect x="380.1" y="205.6" width="1.2" height="1.2" fill="#ddd"/>
<rect x="360.2" y="206.6" width="1.2" height="1.2" fill="#ddd"/>
<rect x="308.3" y="202.4" width="1.2" height="1.2" fill="#ddd"/>
<rect x="278.6" y="134.4" width="1.2" height="1.2" fill="#ddd"/>
<circle cx="326.7" cy="93.6" r="3.5" fill="#fff"/>
<circle cx="306.8" cy="181" r="3" fill="#fff"/>
<circle cx="377" cy="155.5" r="1.5" fill="#fff"/>
<circle cx="400" cy="198.8" r="1.8" fill="#fff"/>
<circle cx="308.5" cy="217.8" r="3" fill="#fff"/>
<circle cx="342.4" cy="210" r="2.5" fill="#fff"/>
<circle cx="411" cy="212.6" r="2.5" fill="#fff"/>
<circle cx="456.7" cy="204.5" r="2" fill="#fff"/>
<circle cx="478" cy="141.7" r="1.5" fill="#fff"/>
<circle cx="604.2" cy="192.6" r="1.8" fill="#fff"/>
<circle cx="561.8" cy="132.3" r="1.2" fill="#fff"/>
<circle cx="523.3" cy="107.8" r="1" fill="#fff"/>
<circle cx="452" cy="176.2" r="1" fill="#fff"/>
<circle cx="627.4" cy="106.8" r="1" fill="#fff"/>
<circle cx="740.2" cy="118.7" r="4" fill="#fff"/>
<circle cx="763.8" cy="198.8" r="5" fill="#fff"/>
<circle cx="789.3" cy="202" r="2" fill="#fff"/>
<circle cx="699" cy="203" r="1.5" fill="#fff"/>
<circle cx="884" cy="160.9" r="3" fill="#fff"/>
<circle cx="875" cy="170.3" r="2.5" fill="#fff"/>
<circle cx="900.6" cy="149.2" r="1.5" fill="#fff"/>
<circle cx="989" cy="90" r="1.5" fill="#fff"/>
<circle cx="555.5" cy="233.5" r="5" fill="#fff"/>
<circle cx="517.4" cy="216.1" r="3" fill="#fff"/>
<circle cx="554.6" cy="279.5" r="1.8" fill="#fff"/>
<circle cx="451.5" cy="301.9" r="1.8" fill="#fff"/>
<circle cx="523.7" cy="304.2" r="1.8" fill="#fff"/>
<circle cx="750.8" cy="255.4" r="1.8" fill="#fff"/>
<circle cx="683.9" cy="268" r="1.8" fill="#fff"/>
<circle cx="886.8" cy="235.5" r="3" fill="#fff"/>
<circle cx="892.7" cy="257.9" r="2.8" fill="#fff"/>
<circle cx="929.7" cy="294.3" r="2.5" fill="#fff"/>
<circle cx="395.9" cy="321.9" r="4" fill="#fff"/>
<circle cx="351.4" cy="380.5" r="3" fill="#fff"/>
<circle cx="430.9" cy="429.5" r="2.5" fill="#fff"/>
<circle cx="549.4" cy="329.2" r="3.5" fill="#fff"/>
<circle cx="583.3" cy="358.7" r="2" fill="#fff"/>
<circle cx="605.9" cy="332.6" r="1.8" fill="#fff"/>
<circle cx="512.8" cy="411.9" r="1.2" fill="#fff"/>
<circle cx="793" cy="425" r="2" fill="#fff"/>
<circle cx="706.3" cy="400" r="1.5" fill="#fff"/>
<circle cx="854.9" cy="429.6" r="3.5" fill="#fff"/>
<circle cx="900" cy="380.6" r="1.8" fill="#fff"/>
<circle cx="893.6" cy="429.1" r="1.5" fill="#fff"/>
<circle cx="441.8" cy="488.3" r="2.5" fill="#fff"/>
<circle cx="398.8" cy="557.8" r="2" fill="#fff"/>
<circle cx="512.7" cy="530.5" r="5" fill="#fff"/>
<circle cx="563.2" cy="518.8" r="2.5" fill="#fff"/>
<circle cx="500.5" cy="444.4" r="2" fill="#fff"/>
<circle cx="618" cy="503.7" r="1.3" fill="#fff"/>
<circle cx="667.9" cy="471.2" r="1.8" fill="#fff"/>
<circle cx="823" cy="494.9" r="1.8" fill="#fff"/>
<circle cx="979.4" cy="543.2" r="3" fill="#fff"/>
<circle cx="1005.2" cy="533.9" r="2.8" fill="#fff"/>
<circle cx="945.2" cy="439" r="2" fill="#fff"/>
<circle cx="828.4" cy="441.5" r="1.5" fill="#fff"/>
<circle cx="264.1" cy="249.6" r="6.4" fill="#e8e0c0"/><circle cx="264.1" cy="249.6" r="5.6" fill="#fff"/>
<circle cx="635.25" cy="323.3" r="191" fill="none" stroke="#c810ff" stroke-width="1" shape-rendering="crispEdges"/>
<circle cx="634.9" cy="323.8" r="127.6" fill="none" stroke="#c810ff" stroke-width="1" shape-rendering="crispEdges"/>
<g shape-rendering="crispEdges"><rect x="506" y="236" width="1" height="174" fill="#c000ff"/><rect x="506" y="236" width="258" height="1" fill="#7400aa"/><rect x="763" y="236" width="1" height="174" fill="#6800a4"/><rect x="506" y="409" width="258" height="1" fill="#6800a4"/>
<rect x="593" y="132" width="1" height="64" fill="#6400a0"/><rect x="593" y="132" width="85" height="1" fill="#6400a0"/><rect x="677" y="132" width="1" height="64" fill="#6400a0"/><rect x="593" y="195" width="85" height="1" fill="#6400a0"/></g>
<text x="635" y="422.6" text-anchor="middle" font-family="Liberation Sans" font-size="7.1" fill="#c018ff">Plane Wave Instruments 12.5: Corrected Dall-Kirkham Carbon + SBIG ST-10XE + ST-237</text>
<rect x="267" y="116" width="3" height="84" fill="#5e1616"/>
<path d="M263 113 V106 Q263 103 266 103 H270 Q273 103 273 106 V113 Z" fill="#a82c2c"/>
<rect x="265.3" y="107.4" width="5.4" height="1.4" fill="#2a0a0a"/><rect x="267.3" y="105.2" width="1.4" height="5.6" fill="#2a0a0a"/>
<ellipse cx="268.2" cy="115.7" rx="5" ry="2.1" fill="#9a0c0c"/>
<path d="M263 199 H273 V205.5 Q273 209 269.5 209 H266.5 Q263 209 263 205.5 Z" fill="#7a1c1c"/>
<rect x="265.2" y="203.6" width="6" height="1.4" fill="#1a0a0a"/>
<circle cx="269" cy="190" r="2.4" fill="#e8b8b8" opacity=".8" filter="url(#bl1)"/><circle cx="269" cy="190" r="1.5" fill="#f4d4d4"/>
<path d="M298.7 121 V107 M300 120.7 H284.5" stroke="#a020d0" stroke-width="3.2" fill="none"/>
<path d="M298.7 121 V107 M300 120.7 H284.5" stroke="#f05a14" stroke-width="2.2" fill="none"/>
<polygon points="298.7,103 295.3,108.3 302.1,108.3" fill="#f05a14"/>
<polygon points="280.5,120.7 285.8,117.3 285.8,124.1" fill="#f05a14"/>
<text x="298.6" y="98.8" font-family="Liberation Sans" font-size="7" fill="#f05a14">N</text>
<text x="272.7" y="124.8" font-family="Liberation Sans" font-size="7" fill="#f05a14">E</text>
</svg>
<div id="status" class="a"></div>
<div class="d" style="left:858.8px;top:561.1px;letter-spacing:-0.13px">FOV: 1° 00′ 00″</div>
<div class="d" style="left:910.5px;top:561.1px;letter-spacing:-0.02px">3/26/2013</div>
<div class="d" style="left:948px;top:561.1px;letter-spacing:-0.15px">11:52:05 AM DST</div>
<div class="a" style="left:1008px;top:560px;width:1px;height:9px;background:#c8c8c8;box-shadow:1px 0 0 #fff"></div>
<svg class="a" style="left:1011px;top:561px" width="8" height="8" viewBox="0 0 8 8"><g fill="#a0a0a0"><rect x="6" y="1" width="1" height="1"/><rect x="4" y="3" width="1" height="1"/><rect x="6" y="3" width="1" height="1"/><rect x="2" y="5" width="1" height="1"/><rect x="4" y="5" width="1" height="1"/><rect x="6" y="5" width="1" height="1"/></g></svg>
<div id="frameB" class="a"></div>
</body></html>
